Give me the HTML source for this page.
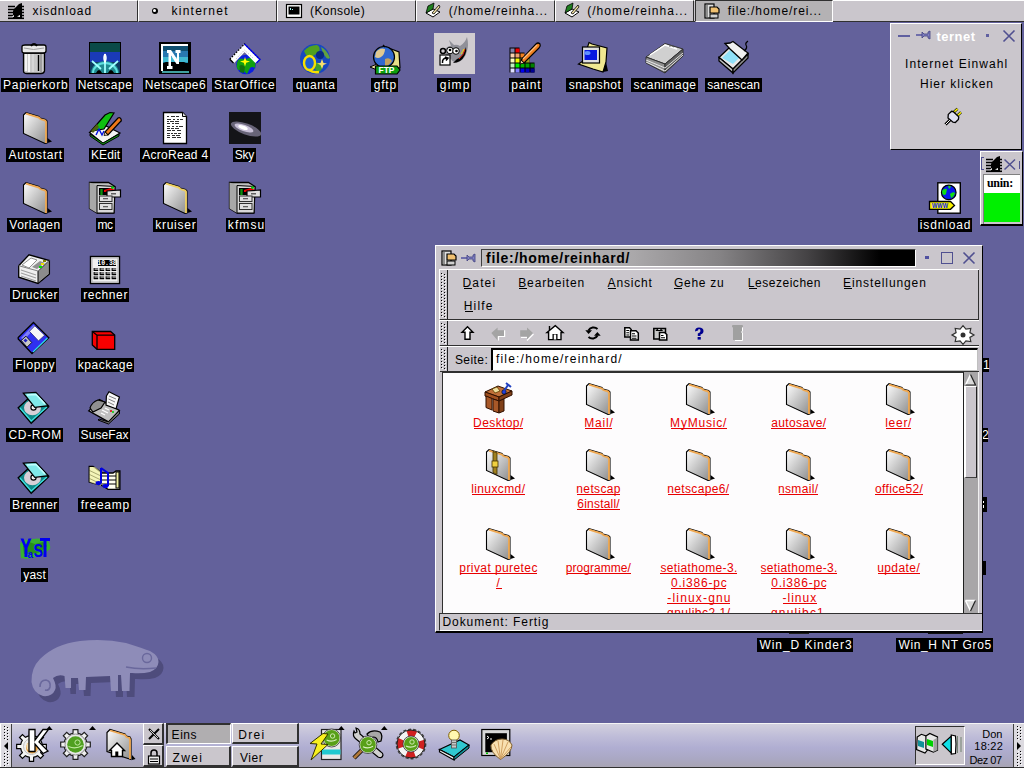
<!DOCTYPE html><html><head><meta charset="utf-8"><style>
*{box-sizing:border-box}
body{margin:0;width:1024px;height:768px;position:relative;overflow:hidden;background:#63619b;font-family:"Liberation Sans",sans-serif;font-size:12px;color:#000}
.a{position:absolute}
.lbl{position:absolute;background:#000;color:#fff;font-size:12px;line-height:14px;height:14px;padding:0 2px;letter-spacing:0.4px;white-space:nowrap}
.tab{position:absolute;top:0;height:22px;background:#cac6cc;border-top:1px solid #fff;border-left:1px solid #fff;border-right:1px solid #303030;border-bottom:1px solid #303030;font-size:12px;letter-spacing:0.6px;white-space:nowrap}
.tab span{position:absolute;top:3px;line-height:14px}
svg{position:absolute;overflow:visible}
.t{position:absolute;white-space:nowrap;line-height:14px}
.dots{position:absolute;background-image:radial-gradient(circle,#505050 0.9px,transparent 1.1px);background-size:4px 4px}
</style></head><body><svg width="0" height="0" style="position:absolute"><defs>
<linearGradient id="gfold" x1="0" y1="0" x2="1" y2="1"><stop offset="0" stop-color="#ffffff"/><stop offset="1" stop-color="#8c8c8c"/></linearGradient>
<linearGradient id="gmetal" x1="0" y1="0" x2="1" y2="0"><stop offset="0" stop-color="#f0f0f0"/><stop offset=".5" stop-color="#b0b0b0"/><stop offset="1" stop-color="#707070"/></linearGradient>
<radialGradient id="gglobe" cx=".35" cy=".35" r=".7"><stop offset="0" stop-color="#8ec8ff"/><stop offset=".6" stop-color="#2a5cc0"/><stop offset="1" stop-color="#0a2060"/></radialGradient>
<linearGradient id="gtitle" x1="0" y1="0" x2="1" y2="0"><stop offset="0" stop-color="#c4c2c4"/><stop offset=".45" stop-color="#8a888a"/><stop offset=".8" stop-color="#202020"/><stop offset="1" stop-color="#000"/></linearGradient>
<radialGradient id="gsuse" cx=".4" cy=".4" r=".7"><stop offset="0" stop-color="#8cc860"/><stop offset="1" stop-color="#2e7a10"/></radialGradient>
<linearGradient id="gteal" x1="0" y1="0" x2="1" y2="1"><stop offset="0" stop-color="#a0f0f0"/><stop offset="1" stop-color="#108080"/></linearGradient>
</defs></svg><svg style="left:0;top:620px" width="200" height="100" viewBox="0 620 200 100">
<path fill="#4e4c7c" transform="translate(5,6)" d="M53 678 Q57 686 55 690 Q52 697 43 696 Q33 693 31.5 682 Q31 668 40 659 Q55 644 80 641 Q104 638 126 643 Q142 648 150 651 Q159 656 158.5 662 Q158 669 150 672 Q142 674 132 673 L130 673 L129.5 691 L122 691 L121 675 L118 675 L118 691 L111 691 L110 676 L86 677 L85.5 690 L79 690 L78 678 L71 678 L71 688 L65.5 688 L64.5 676 Q58 674 53 678 Z"/>
<path fill="#8e8cb8" d="M53 678 Q57 686 55 690 Q52 697 43 696 Q33 693 31.5 682 Q31 668 40 659 Q55 644 80 641 Q104 638 126 643 Q142 648 150 651 Q159 656 158.5 662 Q158 669 150 672 Q142 674 132 673 L130 673 L129.5 691 L122 691 L121 675 L118 675 L118 691 L111 691 L110 676 L86 677 L85.5 690 L79 690 L78 678 L71 678 L71 688 L65.5 688 L64.5 676 Q58 674 53 678 Z"/>
<path d="M40 687 Q40 680 46 680 Q51 681 50 687 Q49 691 45 690" stroke="#6a689c" stroke-width="1.6" fill="none"/>
<circle cx="147" cy="658" r="4.5" fill="none" stroke="#6a689c" stroke-width="1.4"/>
<path d="M126 667 Q140 670 156 668" stroke="#6a689c" stroke-width="1.4" fill="none"/>
</svg><svg style="left:19px;top:42px" width="32" height="32" viewBox="0 0 32 32"><path d="M4.5 11 L25.5 11 L25.5 29 Q25 31.5 22 31.5 L8 31.5 Q4.5 31.5 4.5 29 Z" fill="#c8c8c8" stroke="#000" stroke-width="1.3"/>
<path d="M7 12 L7 29 M10 12 L10 30" stroke="#fff" stroke-width="1.6"/>
<path d="M14 12 L14 30" stroke="#e0e0e0" stroke-width="1.2"/>
<path d="M19.5 13 L19.5 29" stroke="#000" stroke-width="1.4"/><path d="M22 12 L22 30" stroke="#909090" stroke-width="1.5"/>
<path d="M3 4.5 Q3 3 6 3 L25 3 Q27 3 27 5 L27 9 Q27 11 24 11 L6 11 Q3 11 3 9 Z" fill="#e8e8e8" stroke="#000" stroke-width="1.3"/>
<path d="M5 6 Q14 9 25 6" stroke="#a0a0a0" stroke-width="1" fill="none"/>
<path d="M12 4 Q15 0 18 4" stroke="#000" stroke-width="1.8" fill="#606060"/>
</svg><div class="a" style="left:1.0px;top:78px;width:68.0px;height:14px;background:#000"></div><div class="t" style="left:1.0px;top:78px;width:68.7px;text-align:center;color:#fff;letter-spacing:0.722px;text-indent:0.722px">Papierkorb</div><svg style="left:89px;top:42px" width="32" height="32" viewBox="0 0 32 32"><rect x="0.5" y="0.5" width="31" height="31" fill="#0e3a60" stroke="#000" stroke-width="1"/>
<rect x="1" y="1" width="30" height="9" fill="#0a4a48"/>
<rect x="1" y="10" width="30" height="10" fill="#1a3ab8"/>
<path d="M2 31 A14 12 0 0 1 30 31 Z" fill="#208a90"/>
<path d="M4 31 A12 10 0 0 1 28 31" fill="none" stroke="#60e0e0" stroke-width="2"/>
<path d="M16 12 L16 31 M3 19 L12 27 M29 19 L20 27" stroke="#a0ffff" stroke-width="1.8"/>
<path d="M16 12 Q14 16 16 20 Q18 16 16 12" stroke="#fff" stroke-width="1.5" fill="none"/>
<path d="M7 31 Q10 25 13 31 Z M19 31 Q22 25 25 31 Z" fill="#000"/>
</svg><div class="a" style="left:76.0px;top:78px;width:57.0px;height:14px;background:#000"></div><div class="t" style="left:76.0px;top:78px;width:57.5px;text-align:center;color:#fff;letter-spacing:0.500px;text-indent:0.500px">Netscape</div><svg style="left:159px;top:42px" width="32" height="32" viewBox="0 0 32 32"><rect x="0" y="0" width="32" height="32" fill="#000"/><rect x="2" y="2" width="27" height="27" fill="#fff"/><rect x="4" y="4" width="25" height="25" fill="#2090b0"/><rect x="4" y="4" width="25" height="5" fill="#105070"/><rect x="4" y="9" width="25" height="6" fill="#2878b0"/><rect x="4" y="15" width="25" height="5" fill="#40b8d0"/><path d="M4 29 L4 21 L7 20 L25 20 L27 21 L29 21 L29 29 Z" fill="#000"/><rect x="3" y="29" width="27" height="2" fill="#40a0a0"/><path d="M8 8 L12 8 L18 17 L18 11 L16.5 11 L16.5 8 L21.5 8 L21.5 11 L20 11 L20 22 L17.5 22 L12 13.5 L12 24 L13.5 24 L13.5 27 L8 27 L8 24 L9.5 24 L9.5 11 L8 11 Z" fill="#fff"/></svg><div class="a" style="left:143.0px;top:78px;width:64.0px;height:14px;background:#000"></div><div class="t" style="left:143.0px;top:78px;width:64.4px;text-align:center;color:#fff;letter-spacing:0.438px;text-indent:0.438px">Netscape6</div><svg style="left:229px;top:42px" width="32" height="32" viewBox="0 0 32 32"><circle cx="17" cy="22.5" r="9.8" fill="#0c20e0"/><path d="M9 18 Q13 15 16 18 Q20 15 24 16 L26.5 21 L26 26 Q23 24 21 26 L18 32 L15 29 Q12 27 9 28 Q7 25 8 21 Z" fill="#10a010"/><path d="M10.5 24 Q13 21.5 16 25 L15 31 L11 30 Z" fill="#107010"/><path d="M3 19 L15.5 6 L28.5 19" stroke="#fff" stroke-width="6" fill="none" stroke-linejoin="miter"/><path d="M0.8 17.3 L15.5 2 L31 17.5" stroke="#000" stroke-width="1.3" stroke-dasharray="1.6 1.4" fill="none"/><path d="M15.5 2 L31 17.5 L27.5 21" stroke="#0000f0" stroke-width="1.3" fill="none"/><path d="M0.8 17.3 L4.5 21" stroke="#000" stroke-width="1.3"/><path d="M7 17 L15.5 8 L24 16" stroke="#b0b0c0" stroke-width="1" stroke-dasharray="1 1.5" fill="none"/><path d="M16 15 L17.2 18.5 L21 19.5 L17.2 20.8 L16 24.5 L14.8 20.8 L11 19.5 L14.8 18.5 Z" fill="#ffff00"/></svg><div class="a" style="left:212.0px;top:78px;width:64.0px;height:14px;background:#000"></div><div class="t" style="left:212.0px;top:78px;width:64.8px;text-align:center;color:#fff;letter-spacing:0.833px;text-indent:0.833px">StarOffice</div><svg style="left:299px;top:42px" width="32" height="32" viewBox="0 0 32 32"><circle cx="16" cy="17" r="15" fill="#1848c0"/>
<path d="M5 9 Q10 3 18 3 Q22 5 20 10 Q17 12 14 14 Q9 15 7 13 Z" fill="#50a020"/>
<path d="M22 5 Q28 8 31 16 Q28 18 26 14 Q23 10 22 5 Z" fill="#60a040"/>
<path d="M17 21 Q22 20 24 24 Q22 30 18 31 Q15 27 17 21 Z" fill="#40a030"/>
<circle cx="21" cy="13" r="4" fill="#0a2a80"/>
<ellipse cx="10.5" cy="21" rx="5.5" ry="7" fill="#2060d0" stroke="#f8e000" stroke-width="2.4"/>
<path d="M10 28 Q14 31 20 30" stroke="#f8e000" stroke-width="2.4" fill="none"/>
<path d="M23 17 L24.5 21 L28 21.5 L24.5 23 L23 27 L21.5 23 L18 21.5 L21.5 21 Z" fill="#f8e070"/>
</svg><div class="a" style="left:293.0px;top:78px;width:44.0px;height:14px;background:#000"></div><div class="t" style="left:293.0px;top:78px;width:44.5px;text-align:center;color:#fff;letter-spacing:0.500px;text-indent:0.500px">quanta</div><svg style="left:369px;top:42px" width="32" height="32" viewBox="0 0 32 32"><path d="M17 5 L30 10 L31 26 L16 26 Z" fill="#e8e088" stroke="#000" stroke-width="1.2"/>
<circle cx="15" cy="15" r="10.5" fill="#3068d0" stroke="#000" stroke-width="1.2"/>
<path d="M7 10 Q11 5 16 7 Q16 12 12 15 Q9 17 6 15 Z" fill="#e0c890"/>
<path d="M16 17 Q21 15 23 19 Q20 24 16 24 Z" fill="#c0a060"/>
<path d="M14 3 L16 5" stroke="#000" stroke-width="1.5"/>
<path d="M1 25 L8 22 L8 28 Z" fill="#f0e0a0" stroke="#000" stroke-width="1"/>
<path d="M6.5 24 L28 24 L31 28 L28 32 L6.5 32 Z" fill="#10a010" stroke="#000" stroke-width="1.2"/>
<text x="17.5" y="31" font-family="Liberation Sans" font-weight="bold" font-size="8.5" text-anchor="middle" fill="#fff">FTP</text>
</svg><div class="a" style="left:371.0px;top:78px;width:27.0px;height:14px;background:#000"></div><div class="t" style="left:371.0px;top:78px;width:27.8px;text-align:center;color:#fff;letter-spacing:0.833px;text-indent:0.833px">gftp</div><div class="a" style="left:434px;top:33px;width:41px;height:41px;background:#d0ccd0"></div><svg style="left:439px;top:37px" width="32" height="32" viewBox="0 0 32 32"><path d="M6 14 Q7 9 12 9 L10 3 L15 8 Q18 7 21 9 Q26 6 28 0 Q30 8 28 14 Q26 22 20 25 Q14 26 12 22 Q7 20 6 14 Z" fill="#909098"/>
<circle cx="11" cy="13.5" r="3.3" fill="#fff" stroke="#000" stroke-width="1"/><circle cx="17" cy="14" r="3.3" fill="#fff" stroke="#000" stroke-width="1"/>
<circle cx="11" cy="13" r="1.3" fill="#000"/><circle cx="17.5" cy="14" r="1.3" fill="#000"/>
<path d="M14 26 Q22 26 26 18 Q28 14 27 10 Q24 20 18 22 Z" fill="#000"/>
<path d="M20 22 Q25 18 26 12" stroke="#e02000" stroke-width="1" fill="none"/><path d="M22 17 Q24 14 25 12" stroke="#f0e000" stroke-width="1" fill="none"/>
<circle cx="4" cy="14" r="2.5" fill="none" stroke="#000" stroke-width="1.5"/>
<rect x="1" y="18" width="10" height="10" fill="#fff" stroke="#000" stroke-width="1.2"/>
<path d="M3.5 26 Q3 21 8 21 M6 20 L9 21 L7 23.5" stroke="#000" stroke-width="1.5" fill="none"/>
</svg><div class="a" style="left:437.0px;top:78px;width:34.0px;height:14px;background:#000"></div><div class="t" style="left:437.0px;top:78px;width:35.2px;text-align:center;color:#fff;letter-spacing:1.167px;text-indent:1.167px">gimp</div><svg style="left:509px;top:42px" width="32" height="32" viewBox="0 0 32 32"><path d="M0.5 5.5 H10.5 V10.5 H15.5 V15.5 H20.5 V20.5 H25.5 V30.5 H0.5 Z" fill="#000"/><rect x="1.5" y="6.5" width="4" height="4" fill="#8080a8"/><rect x="6.5" y="6.5" width="4" height="4" fill="#f00000"/><rect x="1.5" y="11.5" width="4" height="4" fill="#f8d0b0"/><rect x="6.5" y="11.5" width="4" height="4" fill="#f0a070"/><rect x="11.5" y="11.5" width="4" height="4" fill="#f08020"/><rect x="1.5" y="16.5" width="4" height="4" fill="#f8f8c0"/><rect x="6.5" y="16.5" width="4" height="4" fill="#f8f800"/><rect x="11.5" y="16.5" width="4" height="4" fill="#c8c840"/><rect x="16.5" y="16.5" width="4" height="4" fill="#a0a020"/><rect x="1.5" y="21.5" width="4" height="4" fill="#c0f0c0"/><rect x="6.5" y="21.5" width="4" height="4" fill="#00f000"/><rect x="11.5" y="21.5" width="4" height="4" fill="#00b000"/><rect x="16.5" y="21.5" width="4" height="4" fill="#00a000"/><rect x="21.5" y="21.5" width="4" height="4" fill="#008000"/><rect x="1.5" y="26.5" width="4" height="4" fill="#e0e0ff"/><rect x="6.5" y="26.5" width="4" height="4" fill="#8080ff"/><rect x="11.5" y="26.5" width="4" height="4" fill="#0000f0"/><rect x="16.5" y="26.5" width="4" height="4" fill="#0000c0"/><rect x="21.5" y="26.5" width="4" height="4" fill="#000090"/><path d="M12 18 L27 2 Q29 0 31 2 Q32 4 30 6 L15 21 Z" fill="#f08020" stroke="#000" stroke-width="1.2"/><path d="M14 17 L28 3" stroke="#ffc080" stroke-width="1.2"/><path d="M12 18 L15 21 L11 22 Z" fill="#f0d0a0" stroke="#000" stroke-width=".8"/></svg><div class="a" style="left:509.0px;top:78px;width:33.0px;height:14px;background:#000"></div><div class="t" style="left:509.0px;top:78px;width:33.9px;text-align:center;color:#fff;letter-spacing:0.875px;text-indent:0.875px">paint</div><svg style="left:579px;top:42px" width="32" height="32" viewBox="0 0 32 32"><path d="M10 0.5 L13 2 L28 6 L27 20 L24 30 L14 27 L-0.5 22 L4 19 Z" fill="#f0e890" stroke="#000" stroke-width="1.2"/>
<path d="M27 20 L24 30 L29 29 Z" fill="#000"/>
<rect x="3.5" y="5" width="17" height="16" fill="#e0e0e0" stroke="#000" stroke-width="1.2"/>
<rect x="5.5" y="8" width="12.5" height="10" fill="#0818e0"/>
<ellipse cx="8.5" cy="11" rx="3" ry="2" fill="#6090ff"/>
</svg><div class="a" style="left:566.0px;top:78px;width:57.0px;height:14px;background:#000"></div><div class="t" style="left:566.0px;top:78px;width:57.5px;text-align:center;color:#fff;letter-spacing:0.500px;text-indent:0.500px">snapshot</div><svg style="left:649px;top:42px" width="32" height="32" viewBox="0 0 32 32"><path d="M-3 15 L16 1.5 L34 7 L16 22 Z" fill="#d0d0d0" stroke="#303030" stroke-width="1"/>
<path d="M-3 15 L16 22 L16 31 L-3 21 Z" fill="#909090" stroke="#303030" stroke-width="1"/>
<path d="M16 22 L34 7 L34 14 L16 31 Z" fill="#606060" stroke="#303030" stroke-width="1"/>
<path d="M-3 18 L16 26 L34 11 M-3 20 L16 29 L34 13" stroke="#f0f0f0" stroke-width=".9" fill="none"/>
<path d="M1 13 L16 3 L28 7" stroke="#ffffff" stroke-width="1.5" fill="none"/>
<path d="M20 4 Q23 3 25 5" stroke="#505050" stroke-width="1" fill="none"/>
</svg><div class="a" style="left:631.0px;top:78px;width:67.0px;height:14px;background:#000"></div><div class="t" style="left:631.0px;top:78px;width:67.6px;text-align:center;color:#fff;letter-spacing:0.562px;text-indent:0.562px">scanimage</div><svg style="left:719px;top:42px" width="32" height="32" viewBox="0 0 32 32"><path d="M0 15.5 L11 5 L29 12 L14 27 Z" fill="#e8e8e8" stroke="#000" stroke-width="1.3"/>
<path d="M3 16 L11 8 L23 13 L14 22 Z" fill="#90e0f8"/>
<path d="M0 15.5 L14 27 L14 31 L0 19 Z" fill="#c0c0c0" stroke="#000" stroke-width="1.3"/>
<path d="M14 27 L29 12 L29 16 L14 31 Z" fill="#909090" stroke="#000" stroke-width="1.3"/>
<path d="M6 1.5 L11 1 L14 -0.5 L29 11 L23 18 L11 7 Z" fill="#f0f0f0" stroke="#000" stroke-width="1.3"/>
<path d="M25 9 Q29 6 27 3 Q26 1 29 -1" stroke="#000" stroke-width="1.2" fill="none"/>
</svg><div class="a" style="left:705.0px;top:78px;width:57.0px;height:14px;background:#000"></div><div class="t" style="left:705.0px;top:78px;width:57.2px;text-align:center;color:#fff;letter-spacing:0.214px;text-indent:0.214px">sanescan</div><svg style="left:20.5px;top:112px" width="32" height="32" viewBox="0 0 32 32"><path d="M2.5 3 L5 0.5 L18 4.5 L19 6 L24.5 7.5 L26 9 L26 31 L24 31.5 L2.5 21.5 Z" fill="url(#gfold)" stroke="#000" stroke-width="1.1"/>
<path d="M5 1.6 L18 5.6 L19.3 7 L24.3 8.6 L25 10 L25 31" stroke="#f0a850" stroke-width="1.8" fill="none"/>
<path d="M26.5 26 L31 29.5 L26.5 31 Z" fill="#000"/></svg><div class="a" style="left:6.0px;top:148px;width:58.0px;height:14px;background:#000"></div><div class="t" style="left:6.0px;top:148px;width:58.7px;text-align:center;color:#fff;letter-spacing:0.688px;text-indent:0.688px">Autostart</div><svg style="left:89px;top:112px" width="32" height="32" viewBox="0 0 32 32"><path d="M0.5 20.5 L6 17 L17 14 L31 21 L14 31.5 Z" fill="#f4f4f4" stroke="#000" stroke-width="1.2"/>
<path d="M1 22 L14 31 L30 22 L30 24 L14 33 L1 24 Z" fill="#10a010" stroke="#000" stroke-width="1"/>
<path d="M2 19 L16 3 L21 0.5 L25 1 L15 17 Z" fill="#10c010" stroke="#000" stroke-width="1.2"/>
<path d="M2 19 L8 12 L10 15 L4 21 Z" fill="#506010"/>
<path d="M7 23 L10 17 L13 23 L15 19" stroke="#0010e0" stroke-width="1.4" fill="none"/>
<path d="M16 20 L29 6 Q31 5 32 7 Q33 9 31 10 L19 23 Z" fill="#f07818" stroke="#000" stroke-width="1.2"/>
<path d="M16 20 L19 23 L15 23.5 Z" fill="#f0d0b0" stroke="#000" stroke-width=".8"/>
</svg><div class="a" style="left:89.0px;top:148px;width:33.0px;height:14px;background:#000"></div><div class="t" style="left:89.0px;top:148px;width:33.1px;text-align:center;color:#fff;letter-spacing:0.125px;text-indent:0.125px">KEdit</div><svg style="left:159px;top:112px" width="32" height="32" viewBox="0 0 32 32"><path d="M4.5 0.5 L23.5 0.5 L27.5 4.5 L27.5 31.5 L4.5 31.5 Z" fill="#fff" stroke="#000" stroke-width="1.3"/><path d="M23.5 0.5 L23.5 4.5 L27.5 4.5" fill="#e0e0e0" stroke="#000" stroke-width="1"/><rect x="8" y="4" width="2" height="1" fill="#303030"/><rect x="12" y="4" width="4" height="1" fill="#303030"/><rect x="17" y="4" width="3" height="1" fill="#303030"/><rect x="8" y="7" width="4" height="1" fill="#303030"/><rect x="14" y="7" width="2" height="1" fill="#303030"/><rect x="18" y="7" width="2" height="1" fill="#303030"/><rect x="21" y="7" width="3" height="1" fill="#303030"/><rect x="8" y="9" width="2" height="1" fill="#303030"/><rect x="11" y="9" width="4" height="1" fill="#303030"/><rect x="16" y="9" width="4" height="1" fill="#303030"/><rect x="8" y="11" width="3" height="1" fill="#303030"/><rect x="13" y="11" width="2" height="1" fill="#303030"/><rect x="16" y="11" width="4" height="1" fill="#303030"/><rect x="8" y="14" width="3" height="1" fill="#303030"/><rect x="13" y="14" width="2" height="1" fill="#303030"/><rect x="17" y="14" width="2" height="1" fill="#303030"/><rect x="20" y="14" width="4" height="1" fill="#303030"/><rect x="8" y="16" width="3" height="1" fill="#303030"/><rect x="12" y="16" width="3" height="1" fill="#303030"/><rect x="16" y="16" width="4" height="1" fill="#303030"/><rect x="8" y="18" width="4" height="1" fill="#303030"/><rect x="13" y="18" width="3" height="1" fill="#303030"/><rect x="18" y="18" width="4" height="1" fill="#303030"/><rect x="8" y="21" width="3" height="1" fill="#303030"/><rect x="12" y="21" width="2" height="1" fill="#303030"/><rect x="15" y="21" width="3" height="1" fill="#303030"/><rect x="19" y="21" width="3" height="1" fill="#303030"/><rect x="8" y="23" width="3" height="1" fill="#303030"/><rect x="13" y="23" width="3" height="1" fill="#303030"/><rect x="17" y="23" width="4" height="1" fill="#303030"/><rect x="8" y="25" width="3" height="1" fill="#303030"/><rect x="13" y="25" width="4" height="1" fill="#303030"/><rect x="18" y="25" width="4" height="1" fill="#303030"/></svg><div class="a" style="left:140.0px;top:148px;width:70.0px;height:14px;background:#000"></div><div class="t" style="left:140.0px;top:148px;width:70.3px;text-align:center;color:#fff;letter-spacing:0.278px;text-indent:0.278px">AcroRead 4</div><svg style="left:229px;top:112px" width="32" height="32" viewBox="0 0 32 32"><rect x="0" y="0" width="32" height="32" fill="#141418"/><ellipse cx="17" cy="17" rx="16" ry="5.5" transform="rotate(20 17 17)" fill="#686478"/><ellipse cx="15" cy="16" rx="10" ry="3.2" transform="rotate(20 15 16)" fill="#c8c0d8"/><ellipse cx="14" cy="15.5" rx="5" ry="1.8" transform="rotate(20 14 15.5)" fill="#fff"/></svg><div class="a" style="left:233.0px;top:148px;width:23.0px;height:14px;background:#000"></div><div class="t" style="left:233.0px;top:148px;width:22.8px;text-align:center;color:#fff;letter-spacing:-0.250px;text-indent:-0.250px">Sky</div><svg style="left:20.5px;top:182px" width="32" height="32" viewBox="0 0 32 32"><path d="M2.5 3 L5 0.5 L18 4.5 L19 6 L24.5 7.5 L26 9 L26 31 L24 31.5 L2.5 21.5 Z" fill="url(#gfold)" stroke="#000" stroke-width="1.1"/>
<path d="M5 1.6 L18 5.6 L19.3 7 L24.3 8.6 L25 10 L25 31" stroke="#f0a850" stroke-width="1.8" fill="none"/>
<path d="M26.5 26 L31 29.5 L26.5 31 Z" fill="#000"/></svg><div class="a" style="left:7.0px;top:218px;width:55.0px;height:14px;background:#000"></div><div class="t" style="left:7.0px;top:218px;width:55.5px;text-align:center;color:#fff;letter-spacing:0.500px;text-indent:0.500px">Vorlagen</div><svg style="left:89px;top:182px" width="32" height="32" viewBox="0 0 32 32"><path d="M0.5 0.5 L19.5 0.5 L26 4.5 L25 31 L8 31 L0.5 26.5 Z" fill="#c0c0c0" stroke="#000" stroke-width="1.3"/>
<path d="M0.5 0.5 L8 3.5 L8 31 L0.5 26.5 Z" fill="#a8a8a8"/>
<path d="M8 3.5 L26 4.5 L25 31 L8 31 Z" fill="#d8d8d8" stroke="#000" stroke-width="1"/>
<rect x="10" y="6" width="13" height="7" fill="#000"/>
<path d="M12 7 L12 13 M13 7 L13 13" stroke="#10c010" stroke-width="1"/>
<path d="M15 8 L22 6 L26 8 L26 9 L15 10 Z" fill="#f00000"/>
<circle cx="23.5" cy="5.5" r="1.5" fill="#10c010"/>
<path d="M18 9 L31.5 8 L31.5 15 L18 15 Z" fill="#e0e0e0" stroke="#000" stroke-width="1.2"/>
<rect x="22" y="11" width="5" height="1.5" fill="#606060"/>
<rect x="10.5" y="14" width="12.5" height="5.5" fill="#e0e0e0" stroke="#303030" stroke-width="1"/>
<rect x="10.5" y="21.5" width="12.5" height="6" fill="#e0e0e0" stroke="#303030" stroke-width="1"/>
<rect x="14" y="16" width="5" height="1.3" fill="#606060"/><rect x="14" y="24" width="5" height="1.3" fill="#606060"/>
</svg><div class="a" style="left:96.0px;top:218px;width:19.0px;height:14px;background:#000"></div><div class="t" style="left:96.0px;top:218px;width:18.5px;text-align:center;color:#fff;letter-spacing:-0.500px;text-indent:-0.500px">mc</div><svg style="left:160.5px;top:182px" width="32" height="32" viewBox="0 0 32 32"><path d="M2.5 3 L5 0.5 L18 4.5 L19 6 L24.5 7.5 L26 9 L26 31 L24 31.5 L2.5 21.5 Z" fill="url(#gfold)" stroke="#000" stroke-width="1.1"/>
<path d="M5 1.6 L18 5.6 L19.3 7 L24.3 8.6 L25 10 L25 31" stroke="#f0d060" stroke-width="1.8" fill="none"/>
<path d="M26.5 26 L31 29.5 L26.5 31 Z" fill="#000"/></svg><div class="a" style="left:153.0px;top:218px;width:44.0px;height:14px;background:#000"></div><div class="t" style="left:153.0px;top:218px;width:44.8px;text-align:center;color:#fff;letter-spacing:0.750px;text-indent:0.750px">kruiser</div><svg style="left:229px;top:182px" width="32" height="32" viewBox="0 0 32 32"><path d="M0.5 0.5 L19.5 0.5 L26 4.5 L25 31 L8 31 L0.5 26.5 Z" fill="#c0c0c0" stroke="#000" stroke-width="1.3"/>
<path d="M0.5 0.5 L8 3.5 L8 31 L0.5 26.5 Z" fill="#a8a8a8"/>
<path d="M8 3.5 L26 4.5 L25 31 L8 31 Z" fill="#d8d8d8" stroke="#000" stroke-width="1"/>
<rect x="10" y="6" width="13" height="7" fill="#000"/>
<path d="M12 7 L12 13 M13 7 L13 13" stroke="#10c010" stroke-width="1"/>
<path d="M15 8 L22 6 L26 8 L26 9 L15 10 Z" fill="#f00000"/>
<circle cx="23.5" cy="5.5" r="1.5" fill="#10c010"/>
<path d="M18 9 L31.5 8 L31.5 15 L18 15 Z" fill="#e0e0e0" stroke="#000" stroke-width="1.2"/>
<rect x="22" y="11" width="5" height="1.5" fill="#606060"/>
<rect x="10.5" y="14" width="12.5" height="5.5" fill="#e0e0e0" stroke="#303030" stroke-width="1"/>
<rect x="10.5" y="21.5" width="12.5" height="6" fill="#e0e0e0" stroke="#303030" stroke-width="1"/>
<rect x="14" y="16" width="5" height="1.3" fill="#606060"/><rect x="14" y="24" width="5" height="1.3" fill="#606060"/>
</svg><div class="a" style="left:226.0px;top:218px;width:39.0px;height:14px;background:#000"></div><div class="t" style="left:226.0px;top:218px;width:40.1px;text-align:center;color:#fff;letter-spacing:1.125px;text-indent:1.125px">kfmsu</div><svg style="left:19px;top:252px" width="32" height="32" viewBox="0 0 32 32"><path d="M-0.3 13.7 L10 2.8 L30.4 8.5 L30.4 22 L19 31.4 L-0.3 25.2 Z" fill="#f0f0f0" stroke="#000" stroke-width="1.3"/>
<path d="M19 19 L30.4 8.5 L30.4 22 L19 31.4 Z" fill="#8c8c8c" stroke="#000" stroke-width="1"/>
<path d="M-0.3 13.7 L19 19 L30.4 8.5" fill="none" stroke="#808080" stroke-width="1"/>
<path d="M3 13 L12 6 L18 8 L10 16 Z" fill="#fff" stroke="#909090" stroke-width="1"/>
<path d="M13 15 L21 9 L26 11 L18 17 Z" fill="#909090"/>
<path d="M2 18 L17 23 M2 21 L17 26 M2 24 L17 29" stroke="#a0a0a0" stroke-width="1.2"/>
<rect x="22" y="11" width="3" height="2" fill="#f0e000"/><rect x="20" y="14" width="3" height="2" fill="#00e000"/><rect x="24" y="8" width="3" height="2" fill="#808000"/>
</svg><div class="a" style="left:10.0px;top:288px;width:49.0px;height:14px;background:#000"></div><div class="t" style="left:10.0px;top:288px;width:49.6px;text-align:center;color:#fff;letter-spacing:0.583px;text-indent:0.583px">Drucker</div><svg style="left:89px;top:252px" width="32" height="32" viewBox="0 0 32 32"><rect x="1.5" y="4.5" width="29" height="27" fill="#f0f0f0" stroke="#000" stroke-width="1.4"/>
<rect x="3" y="6" width="26" height="24" fill="none" stroke="#b0b0b0" stroke-width="1"/>
<rect x="9" y="8" width="18" height="6" fill="#000"/>
<text x="18" y="13.3" font-family="Liberation Mono" font-size="6.5" text-anchor="middle" fill="#fff" font-weight="bold">10.38</text><path d="M5.2 16.0 L5.2 18.5 L9.2 18.5" stroke="#000" stroke-width="1.2" fill="none"/><rect x="5.9" y="16.0" width="3.3" height="1.8" fill="#707070"/><path d="M11.2 16.0 L11.2 18.5 L15.2 18.5" stroke="#000" stroke-width="1.2" fill="none"/><rect x="11.899999999999999" y="16.0" width="3.3" height="1.8" fill="#707070"/><path d="M17.2 16.0 L17.2 18.5 L21.2 18.5" stroke="#000" stroke-width="1.2" fill="none"/><rect x="17.9" y="16.0" width="3.3" height="1.8" fill="#707070"/><path d="M23.2 16.0 L23.2 18.5 L27.2 18.5" stroke="#000" stroke-width="1.2" fill="none"/><rect x="23.9" y="16.0" width="3.3" height="1.8" fill="#707070"/><path d="M5.2 20.1 L5.2 22.6 L9.2 22.6" stroke="#000" stroke-width="1.2" fill="none"/><rect x="5.9" y="20.1" width="3.3" height="1.8" fill="#707070"/><path d="M11.2 20.1 L11.2 22.6 L15.2 22.6" stroke="#000" stroke-width="1.2" fill="none"/><rect x="11.899999999999999" y="20.1" width="3.3" height="1.8" fill="#707070"/><path d="M17.2 20.1 L17.2 22.6 L21.2 22.6" stroke="#000" stroke-width="1.2" fill="none"/><rect x="17.9" y="20.1" width="3.3" height="1.8" fill="#707070"/><path d="M23.2 20.1 L23.2 22.6 L27.2 22.6" stroke="#000" stroke-width="1.2" fill="none"/><rect x="23.9" y="20.1" width="3.3" height="1.8" fill="#707070"/><path d="M5.2 24.2 L5.2 26.7 L9.2 26.7" stroke="#000" stroke-width="1.2" fill="none"/><rect x="5.9" y="24.2" width="3.3" height="1.8" fill="#707070"/><path d="M11.2 24.2 L11.2 26.7 L15.2 26.7" stroke="#000" stroke-width="1.2" fill="none"/><rect x="11.899999999999999" y="24.2" width="3.3" height="1.8" fill="#707070"/><path d="M17.2 24.2 L17.2 26.7 L21.2 26.7" stroke="#000" stroke-width="1.2" fill="none"/><rect x="17.9" y="24.2" width="3.3" height="1.8" fill="#707070"/><path d="M23.2 24.2 L23.2 26.7 L27.2 26.7" stroke="#000" stroke-width="1.2" fill="none"/><rect x="23.9" y="24.2" width="3.3" height="1.8" fill="#707070"/></svg><div class="a" style="left:81.0px;top:288px;width:48.0px;height:14px;background:#000"></div><div class="t" style="left:81.0px;top:288px;width:48.6px;text-align:center;color:#fff;letter-spacing:0.583px;text-indent:0.583px">rechner</div><svg style="left:19px;top:322px" width="32" height="32" viewBox="0 0 32 32"><path d="M14.5 0.5 L29.8 15.8 L13 31.5 L-0.8 17 L-0.8 15.5 Z" fill="#3030f0" stroke="#000" stroke-width="1.3"/>
<path d="M2 16 L14.5 3 L17 5 L5 18 Z" fill="#8080f8"/>
<path d="M10.4 9.3 L15.8 3.8 L25.7 13.2 L19.5 18.9 Z" fill="#f8f8f8" stroke="#202080" stroke-width=".8"/>
<path d="M2.3 18.4 L7 14.2 L12.7 20.5 L8 25.2 Z" fill="#c8c8c8" stroke="#000" stroke-width=".8"/>
<rect x="5" y="17" width="3" height="3" transform="rotate(45 6.5 18.5)" fill="#2020c0"/>
<path d="M14 30 L28.5 16" stroke="#30e0f0" stroke-width="1.2"/>
</svg><div class="a" style="left:13.0px;top:358px;width:43.0px;height:14px;background:#000"></div><div class="t" style="left:13.0px;top:358px;width:43.7px;text-align:center;color:#fff;letter-spacing:0.700px;text-indent:0.700px">Floppy</div><svg style="left:89px;top:322px" width="32" height="32" viewBox="0 0 32 32"><path d="M3.3 9.5 L21.6 9.5 L25.7 13 L25.7 27.3 L8 27.3 L3.3 23 Z" fill="#f80000" stroke="#000" stroke-width="1.3"/>
<path d="M3.3 9.5 L8 13.2 L25.7 13.2 M8 13.2 L8 27.3" stroke="#000" stroke-width="1.3" fill="none"/>
</svg><div class="a" style="left:76.0px;top:358px;width:58.0px;height:14px;background:#000"></div><div class="t" style="left:76.0px;top:358px;width:58.5px;text-align:center;color:#fff;letter-spacing:0.500px;text-indent:0.500px">kpackage</div><svg style="left:19px;top:392px" width="32" height="32" viewBox="0 0 32 32"><path d="M-0.8 15.8 L12 4 L29.6 14.8 L12.2 31.4 Z" fill="#108888" stroke="#000" stroke-width="1.3"/>
<path d="M1 16 L12.2 29 L28 15" stroke="#40e0e0" stroke-width="1.2" fill="none"/>
<ellipse cx="13.5" cy="15.8" rx="8.5" ry="7.5" fill="#d8d0d8"/>
<circle cx="14.5" cy="15.5" r="2.6" fill="#f0f0f0" stroke="#000" stroke-width="1.2"/>
<path d="M4.4 1.2 L16.9 0.4 L29.4 13.7 L15.8 15.3 Z" fill="#80e8e8" stroke="#000" stroke-width="1.3"/>
<path d="M8 3 L17 2.5 L26 12" stroke="#c0ffff" stroke-width="1.5" fill="none"/>
</svg><div class="a" style="left:6.0px;top:428px;width:57.0px;height:14px;background:#000"></div><div class="t" style="left:6.0px;top:428px;width:57.7px;text-align:center;color:#fff;letter-spacing:0.700px;text-indent:0.700px">CD-ROM</div><svg style="left:89px;top:392px" width="32" height="32" viewBox="0 0 32 32"><path d="M-0.3 18.9 L10.6 7.5 L30.4 18.4 L19.5 29.9 Z" fill="#c0c0c0" stroke="#000" stroke-width="1.3"/>
<path d="M10 27 L19.5 29.9 L30.4 18.4 L30.4 22 L19.5 32 L9 28 Z" fill="#707070" stroke="#000" stroke-width="1"/>
<path d="M1 16 Q3 10 9 8 L16 10 L12 16 L4 20 Z" fill="#909090" stroke="#000" stroke-width="1.2"/>
<path d="M17.4 4 L20 -0.3 L30.4 5 L27 16.8 L17 13 Z" fill="#f8f8f8" stroke="#000" stroke-width="1.2"/>
<path d="M20 4 L27 7 M19.5 7 L26 10 M19 10 L25 13" stroke="#808080" stroke-width="1"/>
<path d="M13 18 L17 20 M12 21 L16 23 M16 16 L20 18 M15 19 L19 21" stroke="#fff" stroke-width="1.3"/>
<circle cx="22" cy="19" r="1" fill="#e00000"/><circle cx="24" cy="20" r="1" fill="#00d000"/>
</svg><div class="a" style="left:79.0px;top:428px;width:51.0px;height:14px;background:#000"></div><div class="t" style="left:79.0px;top:428px;width:51.1px;text-align:center;color:#fff;letter-spacing:0.083px;text-indent:0.083px">SuseFax</div><svg style="left:19px;top:462px" width="32" height="32" viewBox="0 0 32 32"><path d="M-0.8 15.8 L12 4 L29.6 14.8 L12.2 31.4 Z" fill="#108888" stroke="#000" stroke-width="1.3"/>
<path d="M1 16 L12.2 29 L28 15" stroke="#40e0e0" stroke-width="1.2" fill="none"/>
<ellipse cx="13.5" cy="15.8" rx="8.5" ry="7.5" fill="#d8d0d8"/>
<circle cx="14.5" cy="15.5" r="2.6" fill="#f0f0f0" stroke="#000" stroke-width="1.2"/>
<path d="M4.4 1.2 L16.9 0.4 L29.4 13.7 L15.8 15.3 Z" fill="#80e8e8" stroke="#000" stroke-width="1.3"/>
<path d="M8 3 L17 2.5 L26 12" stroke="#c0ffff" stroke-width="1.5" fill="none"/>
</svg><div class="a" style="left:10.0px;top:498px;width:49.0px;height:14px;background:#000"></div><div class="t" style="left:10.0px;top:498px;width:49.4px;text-align:center;color:#fff;letter-spacing:0.417px;text-indent:0.417px">Brenner</div><svg style="left:89px;top:462px" width="32" height="32" viewBox="0 0 32 32"><path d="M0.2 4.3 L4 4.3 L13 11 L24 11 L27 9 L30.9 9 L30.9 27.3 L19 27.3 L14 24 L0.2 20 Z" fill="#fffff0" stroke="#000" stroke-width="1.3"/>
<path d="M0.5 8.5 L12 14 L29 14 M0.5 12.5 L12 18 L29 18 M0.5 16.5 L12 22 L29 22" stroke="#000" stroke-width="1" fill="none"/>
<path d="M0.5 5 L6 5 L12 10 L12 24 L0.5 20 Z" fill="#f0f0a0" opacity=".7"/>
<rect x="27" y="10" width="3" height="16" fill="#f0f0a0" stroke="#000" stroke-width="1"/>
<path d="M12 6 L12 21 M12 6 L19 11 L19 24" stroke="#0000e0" stroke-width="2" fill="none"/>
<ellipse cx="9.5" cy="21" rx="3" ry="2" fill="#0000e0"/><ellipse cx="16.5" cy="24" rx="3" ry="2" fill="#0000e0"/>
</svg><div class="a" style="left:78.0px;top:498px;width:53.0px;height:14px;background:#000"></div><div class="t" style="left:78.0px;top:498px;width:53.8px;text-align:center;color:#fff;letter-spacing:0.750px;text-indent:0.750px">freeamp</div><svg style="left:19px;top:532px" width="32" height="32" viewBox="0 0 32 32"><path d="M1 12 Q4 7 10 8 Q18 5 28 8 Q32 12 31 17 Q26 22 20 24 Q10 28 2 26 Z" fill="#30c020" opacity=".85"/>
<path d="M4 14 L10 10 L16 12 L24 10 L28 14 L22 20 L12 22 L5 22 Z" fill="#208010" opacity=".7"/>
<path d="M1.5 6.5 L4.5 6.5 L7 13 L9.5 6.5 L12.5 6.5 L8.5 16 L8.5 25 L5.5 25 L5.5 16 Z" fill="#0000f0"/>
<text x="8.5" y="26" font-family="Liberation Sans" font-weight="bold" font-size="10" fill="#0000f0">a</text>
<text x="14.5" y="25" font-family="Liberation Sans" font-weight="bold" font-size="19" fill="#0000f0" transform="scale(.75 1)" transform-origin="14.5 25">S</text>
<path d="M21 6 L31 6 L31 9 L27.5 9 L27.5 25 L24.5 25 L24.5 9 L21 9 Z" fill="#0000f0"/>
</svg><div class="a" style="left:21.0px;top:568px;width:27.0px;height:14px;background:#000"></div><div class="t" style="left:21.0px;top:568px;width:27.2px;text-align:center;color:#fff;letter-spacing:0.167px;text-indent:0.167px">yast</div><svg style="left:929px;top:182px" width="32" height="32" viewBox="0 0 32 32"><rect x="8.8" y="0.8" width="22.5" height="30.4" fill="#fff" stroke="#000" stroke-width="1.4"/><circle cx="19.75" cy="10.4" r="7.3" fill="#0818f0" stroke="#000" stroke-width="1.2"/><path d="M13 9 Q15 6 18 7 L17 12 Q15 14 13.5 12 Z M19 4 Q21 3 22 5 L20 7 Z M21 12 Q24 9 26 11 Q25 15 22 16 Z" fill="#10e010"/><path d="M0.5 19.5 L21.5 19.5 L25.5 23.4 L21.5 27.3 L0.5 27.3 Z" fill="#f8f000" stroke="#000" stroke-width="1.3"/><text x="3" y="26" font-family="Liberation Sans" font-weight="bold" font-size="7.5" fill="#0818f0" textLength="16" lengthAdjust="spacingAndGlyphs">WWW</text></svg><div class="a" style="left:918.0px;top:218px;width:53.5px;height:14px;background:#000"></div><div class="t" style="left:918.0px;top:218px;width:54.4px;text-align:center;color:#fff;letter-spacing:0.857px;text-indent:0.857px">isdnload</div><div class="a" style="left:981px;top:358px;width:8px;height:14px;background:#000"></div><div class="a" style="left:981px;top:428px;width:7px;height:14px;background:#000"></div><div class="a" style="left:981px;top:497px;width:5.5px;height:15px;background:#000"></div><div class="a" style="left:981px;top:561px;width:4.5px;height:14px;background:#000"></div><div class="t" style="left:983px;top:358px;color:#fff;font-size:12px">1</div><div class="t" style="left:982px;top:428px;color:#fff;font-size:12px">2</div><div class="a" style="left:983px;top:501px;width:1px;height:2px;background:#fff"></div><div class="a" style="left:983px;top:505px;width:1px;height:3px;background:#fff"></div><div class="a" style="left:757.0px;top:638px;width:96.0px;height:14px;background:#000"></div><div class="t" style="left:757.0px;top:638px;width:97.0px;text-align:center;color:#fff;letter-spacing:0.958px;text-indent:0.958px">Win_D Kinder3</div><div class="a" style="left:896.0px;top:638px;width:97.0px;height:14px;background:#000"></div><div class="t" style="left:896.0px;top:638px;width:97.6px;text-align:center;color:#fff;letter-spacing:0.625px;text-indent:0.625px">Win_H NT Gro5</div><div class="a" style="left:0;top:0;width:1024px;height:22px;background:#cac6cc;border-top:1px solid #fff;border-bottom:1px solid #303030"></div><div class="tab" style="left:-1px;width:139px"></div><div class="t" style="left:32.5px;top:4.0px;font-size:12px;font-weight:400;color:#000;letter-spacing:1.000px;">xisdnload</div><div class="tab" style="left:138px;width:139px"></div><div class="t" style="left:171.5px;top:4.0px;font-size:12px;font-weight:400;color:#000;letter-spacing:1.250px;">kinternet</div><div class="tab" style="left:277px;width:139px"></div><div class="t" style="left:310.0px;top:4.0px;font-size:12px;font-weight:400;color:#000;letter-spacing:0.412px;">(Konsole)</div><div class="tab" style="left:416px;width:139px"></div><div class="t" style="left:448.8px;top:4.0px;font-size:12px;font-weight:400;color:#000;letter-spacing:0.953px;">(/home/reinha...</div><div class="tab" style="left:555px;width:139px"></div><div class="t" style="left:587.2px;top:4.0px;font-size:12px;font-weight:400;color:#000;letter-spacing:1.053px;">(/home/reinha...</div><div class="tab" style="left:695px;width:138px;background:#b4b2b4;border-top:1px solid #303030;border-left:1px solid #303030;border-right:1px solid #fff;border-bottom:1px solid #fff"></div><div class="t" style="left:727.8px;top:4.0px;font-size:12px;font-weight:400;color:#000;letter-spacing:0.919px;">file:/home/rei...</div><div class="a" style="left:435px;top:245px;width:548px;height:388px;background:#cac6cc;border-top:1px solid #fff;border-left:1px solid #fff;border-right:1px solid #000;border-bottom:2px solid #000"></div><svg style="left:441px;top:250px" width="16" height="16" viewBox="0 0 16 16"><rect x="1" y="1" width="9" height="14" fill="#e0e0e0" stroke="#000" stroke-width="1.2"/>
<rect x="2" y="2" width="2" height="12" fill="#909090"/>
<path d="M6 4 L13 4 L15 6 L15 10 L6 10 Z" fill="#f0c070" stroke="#000" stroke-width="1.2"/>
<rect x="6" y="11" width="8" height="4" fill="#d0d0d0" stroke="#000" stroke-width="1"/></svg><svg style="left:461px;top:254px" width="15" height="9" viewBox="0 0 15 9"><path d="M0 4 L6 4" stroke="#5050a0" stroke-width="1.5"/><path d="M6 1 L8 3 L12 3 L12 1 L14 0 L14 8 L12 7 L12 5 L8 5 L6 7 Z" fill="#8080c0" stroke="#404080" stroke-width=".8"/></svg><div class="a" style="left:481px;top:249px;width:435px;height:18px;background:linear-gradient(90deg,#c0bec0 0%,#aaa8aa 35%,#858385 55%,#454345 75%,#000 92%);border-top:1px solid #404040;border-left:1px solid #404040;border-bottom:1px solid #fff;border-right:1px solid #fff"></div><div class="t" style="left:486.0px;top:251.0px;font-size:14px;font-weight:700;color:#000;letter-spacing:0.716px;">file:/home/reinhard/</div><div class="a" style="left:925px;top:256px;width:4px;height:3px;background:#5050a0"></div><div class="a" style="left:941px;top:252px;width:12px;height:12px;border:1.5px solid #505090"></div><svg style="left:963px;top:252px" width="12" height="12" viewBox="0 0 12 12"><path d="M0.5 0.5 L11.5 11.5 M11.5 0.5 L0.5 11.5" stroke="#505090" stroke-width="1.6"/></svg><div class="a" style="left:440px;top:269px;width:539px;height:51px;border-top:1px solid #fff;border-bottom:1px solid #303030"></div><div class="a" style="left:439px;top:269px;width:1px;height:50px;background:#fff"></div><svg style="left:441px;top:272px" width="6" height="46" shape-rendering="crispEdges"><rect x="0" y="1" width="1" height="1" fill="#000"/><rect x="1" y="2" width="1" height="1" fill="#fff"/><rect x="0" y="4" width="1" height="1" fill="#000"/><rect x="1" y="5" width="1" height="1" fill="#fff"/><rect x="0" y="7" width="1" height="1" fill="#000"/><rect x="1" y="8" width="1" height="1" fill="#fff"/><rect x="0" y="10" width="1" height="1" fill="#000"/><rect x="1" y="11" width="1" height="1" fill="#fff"/><rect x="0" y="13" width="1" height="1" fill="#000"/><rect x="1" y="14" width="1" height="1" fill="#fff"/><rect x="0" y="16" width="1" height="1" fill="#000"/><rect x="1" y="17" width="1" height="1" fill="#fff"/><rect x="0" y="19" width="1" height="1" fill="#000"/><rect x="1" y="20" width="1" height="1" fill="#fff"/><rect x="0" y="22" width="1" height="1" fill="#000"/><rect x="1" y="23" width="1" height="1" fill="#fff"/><rect x="0" y="25" width="1" height="1" fill="#000"/><rect x="1" y="26" width="1" height="1" fill="#fff"/><rect x="0" y="28" width="1" height="1" fill="#000"/><rect x="1" y="29" width="1" height="1" fill="#fff"/><rect x="0" y="31" width="1" height="1" fill="#000"/><rect x="1" y="32" width="1" height="1" fill="#fff"/><rect x="0" y="34" width="1" height="1" fill="#000"/><rect x="1" y="35" width="1" height="1" fill="#fff"/><rect x="0" y="37" width="1" height="1" fill="#000"/><rect x="1" y="38" width="1" height="1" fill="#fff"/><rect x="0" y="40" width="1" height="1" fill="#000"/><rect x="1" y="41" width="1" height="1" fill="#fff"/><rect x="0" y="43" width="1" height="1" fill="#000"/><rect x="1" y="44" width="1" height="1" fill="#fff"/><rect x="3" y="2" width="1" height="1" fill="#000"/><rect x="4" y="3" width="1" height="1" fill="#fff"/><rect x="3" y="5" width="1" height="1" fill="#000"/><rect x="4" y="6" width="1" height="1" fill="#fff"/><rect x="3" y="8" width="1" height="1" fill="#000"/><rect x="4" y="9" width="1" height="1" fill="#fff"/><rect x="3" y="11" width="1" height="1" fill="#000"/><rect x="4" y="12" width="1" height="1" fill="#fff"/><rect x="3" y="14" width="1" height="1" fill="#000"/><rect x="4" y="15" width="1" height="1" fill="#fff"/><rect x="3" y="17" width="1" height="1" fill="#000"/><rect x="4" y="18" width="1" height="1" fill="#fff"/><rect x="3" y="20" width="1" height="1" fill="#000"/><rect x="4" y="21" width="1" height="1" fill="#fff"/><rect x="3" y="23" width="1" height="1" fill="#000"/><rect x="4" y="24" width="1" height="1" fill="#fff"/><rect x="3" y="26" width="1" height="1" fill="#000"/><rect x="4" y="27" width="1" height="1" fill="#fff"/><rect x="3" y="29" width="1" height="1" fill="#000"/><rect x="4" y="30" width="1" height="1" fill="#fff"/><rect x="3" y="32" width="1" height="1" fill="#000"/><rect x="4" y="33" width="1" height="1" fill="#fff"/><rect x="3" y="35" width="1" height="1" fill="#000"/><rect x="4" y="36" width="1" height="1" fill="#fff"/><rect x="3" y="38" width="1" height="1" fill="#000"/><rect x="4" y="39" width="1" height="1" fill="#fff"/><rect x="3" y="41" width="1" height="1" fill="#000"/><rect x="4" y="42" width="1" height="1" fill="#fff"/><rect x="3" y="44" width="1" height="1" fill="#000"/><rect x="4" y="45" width="1" height="1" fill="#fff"/></svg><div class="a" style="left:447px;top:270px;width:1px;height:49px;background:#202020"></div><div class="a" style="left:978px;top:270px;width:1px;height:50px;background:#303030"></div><div class="t" style="left:462.5px;top:276.0px;font-size:12px;font-weight:400;color:#000;letter-spacing:1.150px;">Datei</div><div class="a" style="left:464px;top:288px;width:8px;height:1px;background:#000"></div><div class="t" style="left:518.2px;top:276.0px;font-size:12px;font-weight:400;color:#000;letter-spacing:0.889px;">Bearbeiten</div><div class="a" style="left:519px;top:288px;width:8px;height:1px;background:#000"></div><div class="t" style="left:607.6px;top:276.0px;font-size:12px;font-weight:400;color:#000;letter-spacing:0.817px;">Ansicht</div><div class="a" style="left:608px;top:288px;width:8px;height:1px;background:#000"></div><div class="t" style="left:674.0px;top:276.0px;font-size:12px;font-weight:400;color:#000;letter-spacing:0.700px;">Gehe zu</div><div class="a" style="left:674px;top:288px;width:8px;height:1px;background:#000"></div><div class="t" style="left:747.8px;top:276.0px;font-size:12px;font-weight:400;color:#000;letter-spacing:0.530px;">Lesezeichen</div><div class="a" style="left:749px;top:288px;width:8px;height:1px;background:#000"></div><div class="t" style="left:843.0px;top:276.0px;font-size:12px;font-weight:400;color:#000;letter-spacing:0.900px;">Einstellungen</div><div class="a" style="left:844px;top:288px;width:8px;height:1px;background:#000"></div><div class="t" style="left:463.8px;top:299.0px;font-size:12px;font-weight:400;color:#000;letter-spacing:1.150px;">Hilfe</div><div class="a" style="left:465px;top:311px;width:8px;height:1px;background:#000"></div><div class="a" style="left:440px;top:320px;width:539px;height:26px;border-top:1px solid #fff;border-bottom:1px solid #303030"></div><div class="a" style="left:439px;top:320px;width:1px;height:25px;background:#fff"></div><svg style="left:441px;top:322px" width="6" height="22" shape-rendering="crispEdges"><rect x="0" y="1" width="1" height="1" fill="#000"/><rect x="1" y="2" width="1" height="1" fill="#fff"/><rect x="0" y="4" width="1" height="1" fill="#000"/><rect x="1" y="5" width="1" height="1" fill="#fff"/><rect x="0" y="7" width="1" height="1" fill="#000"/><rect x="1" y="8" width="1" height="1" fill="#fff"/><rect x="0" y="10" width="1" height="1" fill="#000"/><rect x="1" y="11" width="1" height="1" fill="#fff"/><rect x="0" y="13" width="1" height="1" fill="#000"/><rect x="1" y="14" width="1" height="1" fill="#fff"/><rect x="0" y="16" width="1" height="1" fill="#000"/><rect x="1" y="17" width="1" height="1" fill="#fff"/><rect x="0" y="19" width="1" height="1" fill="#000"/><rect x="1" y="20" width="1" height="1" fill="#fff"/><rect x="3" y="2" width="1" height="1" fill="#000"/><rect x="4" y="3" width="1" height="1" fill="#fff"/><rect x="3" y="5" width="1" height="1" fill="#000"/><rect x="4" y="6" width="1" height="1" fill="#fff"/><rect x="3" y="8" width="1" height="1" fill="#000"/><rect x="4" y="9" width="1" height="1" fill="#fff"/><rect x="3" y="11" width="1" height="1" fill="#000"/><rect x="4" y="12" width="1" height="1" fill="#fff"/><rect x="3" y="14" width="1" height="1" fill="#000"/><rect x="4" y="15" width="1" height="1" fill="#fff"/><rect x="3" y="17" width="1" height="1" fill="#000"/><rect x="4" y="18" width="1" height="1" fill="#fff"/><rect x="3" y="20" width="1" height="1" fill="#000"/><rect x="4" y="21" width="1" height="1" fill="#fff"/></svg><div class="a" style="left:447px;top:321px;width:1px;height:24px;background:#202020"></div><svg style="left:461px;top:326px" width="13" height="14" viewBox="0 0 13 14"><path d="M6.5 0.8 L12 6.3 L9 6.3 L9 13.3 L4 13.3 L4 6.3 L1 6.3 Z" fill="#fff" stroke="#000" stroke-width="1.4" stroke-linejoin="miter"/></svg><svg style="left:491px;top:327px" width="14" height="14" viewBox="0 0 14 14"><path d="M0.3 6 L6.6 0.5 L6.6 3.2 L13.6 3.2 L13.6 9.5 L6.6 9.5 L6.6 13.4 Z" fill="#a4a4a4"/><path d="M7.5 13.4 L7.5 9.5 L13.6 9.5 L13.6 3.2" stroke="#fff" stroke-width="1.2" fill="none"/></svg><svg style="left:520px;top:327px" width="14" height="14" viewBox="0 0 14 14"><path d="M13 6 L7 0.5 L7 3.2 L0.2 3.2 L0.2 9.5 L7 9.5 L7 12.5 Z" fill="#a4a4a4"/><path d="M1 10.5 L7 10.5 M7 13.5 L13.5 7" stroke="#fff" stroke-width="1.2" fill="none"/></svg><svg style="left:547px;top:325px" width="16" height="15" viewBox="0 0 16 15"><path d="M8.2 0.6 L16 7.5 L14 7.5 L14 14.6 L1.6 14.6 L1.6 7.5 L0 7.5 Z" fill="#fff" stroke="#000" stroke-width="1.4"/><rect x="5.5" y="9" width="5" height="5.6" fill="#000"/><rect x="6.8" y="9.5" width="2.4" height="5" fill="#fff"/><path d="M2.5 1 L2.5 5" stroke="#000" stroke-width="1.4"/></svg><svg style="left:585px;top:325px" width="16" height="16" viewBox="0 0 16 16"><path d="M3.5 5.5 A5.5 5 0 0 1 12.5 4" stroke="#000" stroke-width="2" fill="none"/><path d="M12.5 10.5 A5.5 5 0 0 1 3.5 12" stroke="#000" stroke-width="2" fill="none"/><path d="M0.3 5.3 L7 5.3 L3.6 9 Z" fill="#000"/><path d="M15.7 10.7 L9 10.7 L12.4 7 Z" fill="#000"/></svg><svg style="left:624px;top:327px" width="15" height="14" viewBox="0 0 15 14"><path d="M0.8 0.8 H5.5 L7.2 2.5 V10 H0.8 Z" fill="#fff" stroke="#000" stroke-width="1.5"/><path d="M2.3 3.5 H5 M2.3 5.8 H5 M2.3 8 H5" stroke="#000" stroke-width="1.1"/><path d="M6.5 3.8 H12 L14.3 6 V13 H6.5 Z" fill="#fff" stroke="#000" stroke-width="1.5"/><path d="M8 6.8 H11 M8 9 H12.5 M8 11.2 H12.5" stroke="#000" stroke-width="1.1"/></svg><svg style="left:653px;top:327px" width="15" height="14" viewBox="0 0 15 14"><rect x="0.8" y="1.5" width="11.7" height="10.5" fill="#c8c8c8" stroke="#000" stroke-width="1.5"/><path d="M3.5 3.5 Q6 -0.5 9 3.5 Z" fill="#fff" stroke="#000" stroke-width="1.2"/><path d="M6.5 5.5 H11.5 L13.8 7.5 V13 H6.5 Z" fill="#fff" stroke="#000" stroke-width="1.5"/><path d="M8 8.5 H10.5 M8 10.8 H12" stroke="#000" stroke-width="1.1"/></svg><svg style="left:694px;top:327px" width="10" height="13" viewBox="0 0 10 13"><path d="M1 4.5 Q1 0.5 5 0.5 Q9.5 0.5 9.5 4 Q9.5 6.5 6.5 7.5 L6.5 9 L3.8 9 L3.8 6.5 Q6.5 5.5 6.5 4 Q6.5 2 5 2 Q4 2 4 3.5 Z" fill="#000090"/><rect x="3.6" y="10" width="3.2" height="2.6" fill="#000090"/></svg><svg style="left:731.5px;top:325px" width="12" height="17" viewBox="0 0 12 17"><path d="M1 1 H10 V15 H1 Z" fill="#a0a0a0"/><rect x="0" y="0" width="11" height="2.5" rx="1" fill="#a0a0a0"/><path d="M10.5 2.5 V6 L9.5 7 L10.5 8 V15.5 H3" stroke="#fff" stroke-width="1" fill="none"/></svg><svg style="left:952px;top:325px" width="22" height="19" viewBox="0 0 22 19"><polygon points="22.0,10.0 17.9,12.4 18.8,16.6 13.9,15.9 11.0,19.4 8.1,15.9 3.2,16.6 4.1,12.4 0.0,10.0 4.1,7.6 3.2,3.4 8.1,4.1 11.0,0.7 13.9,4.1 18.8,3.4 17.9,7.6" fill="#fff" stroke="#303030" stroke-width="1.2"/><circle cx="11" cy="10" r="2.5" fill="#303030"/></svg><div class="a" style="left:440px;top:346px;width:539px;height:26px;border-top:1px solid #fff;border-bottom:1px solid #303030"></div><div class="a" style="left:439px;top:346px;width:1px;height:25px;background:#fff"></div><svg style="left:441px;top:348px" width="6" height="22" shape-rendering="crispEdges"><rect x="0" y="1" width="1" height="1" fill="#000"/><rect x="1" y="2" width="1" height="1" fill="#fff"/><rect x="0" y="4" width="1" height="1" fill="#000"/><rect x="1" y="5" width="1" height="1" fill="#fff"/><rect x="0" y="7" width="1" height="1" fill="#000"/><rect x="1" y="8" width="1" height="1" fill="#fff"/><rect x="0" y="10" width="1" height="1" fill="#000"/><rect x="1" y="11" width="1" height="1" fill="#fff"/><rect x="0" y="13" width="1" height="1" fill="#000"/><rect x="1" y="14" width="1" height="1" fill="#fff"/><rect x="0" y="16" width="1" height="1" fill="#000"/><rect x="1" y="17" width="1" height="1" fill="#fff"/><rect x="0" y="19" width="1" height="1" fill="#000"/><rect x="1" y="20" width="1" height="1" fill="#fff"/><rect x="3" y="2" width="1" height="1" fill="#000"/><rect x="4" y="3" width="1" height="1" fill="#fff"/><rect x="3" y="5" width="1" height="1" fill="#000"/><rect x="4" y="6" width="1" height="1" fill="#fff"/><rect x="3" y="8" width="1" height="1" fill="#000"/><rect x="4" y="9" width="1" height="1" fill="#fff"/><rect x="3" y="11" width="1" height="1" fill="#000"/><rect x="4" y="12" width="1" height="1" fill="#fff"/><rect x="3" y="14" width="1" height="1" fill="#000"/><rect x="4" y="15" width="1" height="1" fill="#fff"/><rect x="3" y="17" width="1" height="1" fill="#000"/><rect x="4" y="18" width="1" height="1" fill="#fff"/><rect x="3" y="20" width="1" height="1" fill="#000"/><rect x="4" y="21" width="1" height="1" fill="#fff"/></svg><div class="a" style="left:447px;top:347px;width:1px;height:24px;background:#202020"></div><div class="t" style="left:454.9px;top:353.0px;font-size:12px;font-weight:400;color:#000;letter-spacing:0.440px;">Seite:</div><div class="a" style="left:491px;top:348px;width:487px;height:23px;background:#fff;border-top:2px solid #000;border-left:2px solid #000;border-bottom:1px solid #c0c0c0;border-right:1px solid #c0c0c0"></div><div class="t" style="left:495.9px;top:352.0px;font-size:12px;font-weight:400;color:#000;letter-spacing:1.211px;">file:/home/reinhard/</div><div class="a" style="left:442px;top:372px;width:537px;height:241px;background:#fdfcfd;border-left:1px solid #303030;border-top:1px solid #303030"></div><div class="a" style="left:963px;top:372px;width:16px;height:241px;background:#a8a6a8;border-left:1px solid #202020;border-right:1px solid #f0f0f0"></div><div class="a" style="left:964px;top:386px;width:13px;height:92px;background:#cac6cc;border-top:1px solid #fff;border-left:2px solid #fff;border-right:1px solid #202020;border-bottom:1px solid #404040"></div><svg style="left:964px;top:373px" width="13" height="13" viewBox="0 0 13 13"><path d="M1.5 12 L6.5 1.5 L11.5 12 Z" fill="#d8d8d8"/><path d="M1.5 12 L6.5 1.5" stroke="#fff" stroke-width="1.5"/><path d="M6.5 1.5 L11.5 12 L1.5 12" stroke="#202020" stroke-width="1.2" fill="none"/></svg><svg style="left:964px;top:599px" width="13" height="13" viewBox="0 0 13 13"><path d="M1.5 1.5 L6.5 12 L11.5 1.5 Z" fill="#d8d8d8"/><path d="M1.5 1.5 L6.5 12 M1.5 1.5 L11.5 1.5" stroke="#fff" stroke-width="1.5"/><path d="M6.5 12 L11.5 1.5" stroke="#202020" stroke-width="1.2"/></svg><div class="a" style="left:443px;top:373px;width:520px;height:240px;overflow:hidden"><svg style="left:41px;top:10px" width="32" height="32" viewBox="0 0 32 32"><path d="M1 9 L14 3 L28 8 L15 14 Z" fill="#c07038" stroke="#301000" stroke-width="1"/>
<path d="M1 9 L15 14 L15 18 L1 13 Z" fill="#a05020" stroke="#301000" stroke-width="1"/>
<path d="M15 14 L28 8 L28 12 L15 18 Z" fill="#804018" stroke="#301000" stroke-width="1"/>
<path d="M2 13 L8 15.5 L8 27 L2 24.5 Z" fill="#a85828" stroke="#301000" stroke-width="1"/>
<path d="M9 16 L15 18 L15 30 L9 28 Z" fill="#a85828" stroke="#301000" stroke-width="1"/>
<path d="M15 18 L20 16 L20 28 L15 30 Z" fill="#804018" stroke="#301000" stroke-width="1"/>
<path d="M8 6 L13 4 L16 8 L11 10 Z" fill="#f0e0a0" stroke="#604000" stroke-width=".8"/>
<circle cx="20" cy="9" r="2.2" fill="#2040e0" stroke="#000" stroke-width=".6"/>
<path d="M20 8 L24 2 M22 0 L27 4" stroke="#2040c0" stroke-width="2"/></svg><div class="t" style="left:30.1px;top:43.0px;font-size:12px;font-weight:400;color:#e80000;letter-spacing:0.400px;">Desktop/</div><div class="a" style="left:31.1px;top:55px;width:48.8px;height:1px;background:#e80000"></div><svg style="left:141px;top:10px" width="32" height="32" viewBox="0 0 32 32"><path d="M2.5 3 L5 0.5 L18 4.5 L19 6 L24.5 7.5 L26 9 L26 31 L24 31.5 L2.5 21.5 Z" fill="url(#gfold)" stroke="#000" stroke-width="1.1"/>
<path d="M5 1.6 L18 5.6 L19.3 7 L24.3 8.6 L25 10 L25 31" stroke="#f0a850" stroke-width="1.8" fill="none"/>
<path d="M26.5 26 L31 29.5 L26.5 31 Z" fill="#000"/></svg><div class="t" style="left:141.3px;top:43.0px;font-size:12px;font-weight:400;color:#e80000;letter-spacing:0.800px;">Mail/</div><div class="a" style="left:142.3px;top:55px;width:27.2px;height:1px;background:#e80000"></div><svg style="left:241px;top:10px" width="32" height="32" viewBox="0 0 32 32"><path d="M2.5 3 L5 0.5 L18 4.5 L19 6 L24.5 7.5 L26 9 L26 31 L24 31.5 L2.5 21.5 Z" fill="url(#gfold)" stroke="#000" stroke-width="1.1"/>
<path d="M5 1.6 L18 5.6 L19.3 7 L24.3 8.6 L25 10 L25 31" stroke="#f0a850" stroke-width="1.8" fill="none"/>
<path d="M26.5 26 L31 29.5 L26.5 31 Z" fill="#000"/></svg><div class="t" style="left:227.1px;top:43.0px;font-size:12px;font-weight:400;color:#e80000;letter-spacing:0.814px;">MyMusic/</div><div class="a" style="left:228.1px;top:55px;width:55.7px;height:1px;background:#e80000"></div><svg style="left:341px;top:10px" width="32" height="32" viewBox="0 0 32 32"><path d="M2.5 3 L5 0.5 L18 4.5 L19 6 L24.5 7.5 L26 9 L26 31 L24 31.5 L2.5 21.5 Z" fill="url(#gfold)" stroke="#000" stroke-width="1.1"/>
<path d="M5 1.6 L18 5.6 L19.3 7 L24.3 8.6 L25 10 L25 31" stroke="#f0a850" stroke-width="1.8" fill="none"/>
<path d="M26.5 26 L31 29.5 L26.5 31 Z" fill="#000"/></svg><div class="t" style="left:328.3px;top:43.0px;font-size:12px;font-weight:400;color:#e80000;letter-spacing:0.350px;">autosave/</div><div class="a" style="left:328.3px;top:55px;width:54.8px;height:1px;background:#e80000"></div><svg style="left:441px;top:10px" width="32" height="32" viewBox="0 0 32 32"><path d="M2.5 3 L5 0.5 L18 4.5 L19 6 L24.5 7.5 L26 9 L26 31 L24 31.5 L2.5 21.5 Z" fill="url(#gfold)" stroke="#000" stroke-width="1.1"/>
<path d="M5 1.6 L18 5.6 L19.3 7 L24.3 8.6 L25 10 L25 31" stroke="#f0a850" stroke-width="1.8" fill="none"/>
<path d="M26.5 26 L31 29.5 L26.5 31 Z" fill="#000"/></svg><div class="t" style="left:442.2px;top:43.0px;font-size:12px;font-weight:400;color:#e80000;letter-spacing:0.725px;">leer/</div><div class="a" style="left:443.2px;top:55px;width:24.9px;height:1px;background:#e80000"></div><svg style="left:41px;top:76px" width="32" height="32" viewBox="0 0 32 32"><path d="M2.5 3 L5 0.5 L18 4.5 L19 6 L24.5 7.5 L26 9 L26 31 L24 31.5 L2.5 21.5 Z" fill="url(#gfold)" stroke="#000" stroke-width="1.1"/>
<path d="M5 1.6 L18 5.6 L19.3 7 L24.3 8.6 L25 10 L25 31" stroke="#f0a850" stroke-width="1.8" fill="none"/>
<path d="M26.5 26 L31 29.5 L26.5 31 Z" fill="#000"/><path d="M9 2.5 L13 3.8 L13 25.5 L9 23.5 Z" fill="#a08020" stroke="#403000" stroke-width=".8"/>
<rect x="8" y="12" width="6" height="6" fill="#f0d040" stroke="#403000" stroke-width=".8"/></svg><div class="t" style="left:28.2px;top:109.0px;font-size:12px;font-weight:400;color:#e80000;letter-spacing:0.388px;">linuxcmd/</div><div class="a" style="left:29.2px;top:121px;width:53.1px;height:1px;background:#e80000"></div><svg style="left:141px;top:76px" width="32" height="32" viewBox="0 0 32 32"><path d="M2.5 3 L5 0.5 L18 4.5 L19 6 L24.5 7.5 L26 9 L26 31 L24 31.5 L2.5 21.5 Z" fill="url(#gfold)" stroke="#000" stroke-width="1.1"/>
<path d="M5 1.6 L18 5.6 L19.3 7 L24.3 8.6 L25 10 L25 31" stroke="#f0a850" stroke-width="1.8" fill="none"/>
<path d="M26.5 26 L31 29.5 L26.5 31 Z" fill="#000"/></svg><div class="t" style="left:133.3px;top:109.0px;font-size:12px;font-weight:400;color:#e80000;letter-spacing:0.367px;">netscap</div><div class="a" style="left:134.3px;top:121px;width:43.2px;height:1px;background:#e80000"></div><div class="t" style="left:134.3px;top:124.0px;font-size:12px;font-weight:400;color:#e80000;letter-spacing:0.213px;">6install/</div><div class="a" style="left:134.3px;top:136px;width:42.7px;height:1px;background:#e80000"></div><svg style="left:241px;top:76px" width="32" height="32" viewBox="0 0 32 32"><path d="M2.5 3 L5 0.5 L18 4.5 L19 6 L24.5 7.5 L26 9 L26 31 L24 31.5 L2.5 21.5 Z" fill="url(#gfold)" stroke="#000" stroke-width="1.1"/>
<path d="M5 1.6 L18 5.6 L19.3 7 L24.3 8.6 L25 10 L25 31" stroke="#f0a850" stroke-width="1.8" fill="none"/>
<path d="M26.5 26 L31 29.5 L26.5 31 Z" fill="#000"/></svg><div class="t" style="left:224.2px;top:109.0px;font-size:12px;font-weight:400;color:#e80000;letter-spacing:0.356px;">netscape6/</div><div class="a" style="left:225.2px;top:121px;width:61.2px;height:1px;background:#e80000"></div><svg style="left:341px;top:76px" width="32" height="32" viewBox="0 0 32 32"><path d="M2.5 3 L5 0.5 L18 4.5 L19 6 L24.5 7.5 L26 9 L26 31 L24 31.5 L2.5 21.5 Z" fill="url(#gfold)" stroke="#000" stroke-width="1.1"/>
<path d="M5 1.6 L18 5.6 L19.3 7 L24.3 8.6 L25 10 L25 31" stroke="#f0a850" stroke-width="1.8" fill="none"/>
<path d="M26.5 26 L31 29.5 L26.5 31 Z" fill="#000"/></svg><div class="t" style="left:335.0px;top:109.0px;font-size:12px;font-weight:400;color:#e80000;letter-spacing:0.333px;">nsmail/</div><div class="a" style="left:336.0px;top:121px;width:39.0px;height:1px;background:#e80000"></div><svg style="left:441px;top:76px" width="32" height="32" viewBox="0 0 32 32"><path d="M2.5 3 L5 0.5 L18 4.5 L19 6 L24.5 7.5 L26 9 L26 31 L24 31.5 L2.5 21.5 Z" fill="url(#gfold)" stroke="#000" stroke-width="1.1"/>
<path d="M5 1.6 L18 5.6 L19.3 7 L24.3 8.6 L25 10 L25 31" stroke="#f0a850" stroke-width="1.8" fill="none"/>
<path d="M26.5 26 L31 29.5 L26.5 31 Z" fill="#000"/></svg><div class="t" style="left:432.1px;top:109.0px;font-size:12px;font-weight:400;color:#e80000;letter-spacing:0.325px;">office52/</div><div class="a" style="left:432.1px;top:121px;width:47.6px;height:1px;background:#e80000"></div><svg style="left:41px;top:155px" width="32" height="32" viewBox="0 0 32 32"><path d="M2.5 3 L5 0.5 L18 4.5 L19 6 L24.5 7.5 L26 9 L26 31 L24 31.5 L2.5 21.5 Z" fill="url(#gfold)" stroke="#000" stroke-width="1.1"/>
<path d="M5 1.6 L18 5.6 L19.3 7 L24.3 8.6 L25 10 L25 31" stroke="#f0a850" stroke-width="1.8" fill="none"/>
<path d="M26.5 26 L31 29.5 L26.5 31 Z" fill="#000"/></svg><div class="t" style="left:16.3px;top:188.0px;font-size:12px;font-weight:400;color:#e80000;letter-spacing:0.415px;">privat puretec</div><div class="a" style="left:17.3px;top:200px;width:76.4px;height:1px;background:#e80000"></div><div class="t" style="left:53.4px;top:203.0px;font-size:12px;font-weight:400;color:#e80000;letter-spacing:2.400px;">/</div><div class="a" style="left:53.4px;top:215px;width:5.4px;height:1px;background:#e80000"></div><svg style="left:141px;top:155px" width="32" height="32" viewBox="0 0 32 32"><path d="M2.5 3 L5 0.5 L18 4.5 L19 6 L24.5 7.5 L26 9 L26 31 L24 31.5 L2.5 21.5 Z" fill="url(#gfold)" stroke="#000" stroke-width="1.1"/>
<path d="M5 1.6 L18 5.6 L19.3 7 L24.3 8.6 L25 10 L25 31" stroke="#f0a850" stroke-width="1.8" fill="none"/>
<path d="M26.5 26 L31 29.5 L26.5 31 Z" fill="#000"/></svg><div class="t" style="left:122.7px;top:188.0px;font-size:12px;font-weight:400;color:#e80000;letter-spacing:0.056px;">programme/</div><div class="a" style="left:123.7px;top:200px;width:64.5px;height:1px;background:#e80000"></div><svg style="left:241px;top:155px" width="32" height="32" viewBox="0 0 32 32"><path d="M2.5 3 L5 0.5 L18 4.5 L19 6 L24.5 7.5 L26 9 L26 31 L24 31.5 L2.5 21.5 Z" fill="url(#gfold)" stroke="#000" stroke-width="1.1"/>
<path d="M5 1.6 L18 5.6 L19.3 7 L24.3 8.6 L25 10 L25 31" stroke="#f0a850" stroke-width="1.8" fill="none"/>
<path d="M26.5 26 L31 29.5 L26.5 31 Z" fill="#000"/></svg><div class="t" style="left:217.4px;top:188.0px;font-size:12px;font-weight:400;color:#e80000;letter-spacing:0.350px;">setiathome-3.</div><div class="a" style="left:217.4px;top:200px;width:76.2px;height:1px;background:#e80000"></div><div class="t" style="left:228.0px;top:203.0px;font-size:12px;font-weight:400;color:#e80000;letter-spacing:0.800px;">0.i386-pc</div><div class="a" style="left:228.0px;top:215px;width:55.4px;height:1px;background:#e80000"></div><div class="t" style="left:224.3px;top:218.0px;font-size:12px;font-weight:400;color:#e80000;letter-spacing:1.167px;">-linux-gnu</div><div class="a" style="left:224.3px;top:230px;width:62.5px;height:1px;background:#e80000"></div><div class="t" style="left:224.0px;top:233.0px;font-size:12px;font-weight:400;color:#e80000;letter-spacing:0.500px;">gnulibc2.1/</div><div class="a" style="left:224.0px;top:245px;width:63.0px;height:1px;background:#e80000"></div><svg style="left:341px;top:155px" width="32" height="32" viewBox="0 0 32 32"><path d="M2.5 3 L5 0.5 L18 4.5 L19 6 L24.5 7.5 L26 9 L26 31 L24 31.5 L2.5 21.5 Z" fill="url(#gfold)" stroke="#000" stroke-width="1.1"/>
<path d="M5 1.6 L18 5.6 L19.3 7 L24.3 8.6 L25 10 L25 31" stroke="#f0a850" stroke-width="1.8" fill="none"/>
<path d="M26.5 26 L31 29.5 L26.5 31 Z" fill="#000"/></svg><div class="t" style="left:317.5px;top:188.0px;font-size:12px;font-weight:400;color:#e80000;letter-spacing:0.350px;">setiathome-3.</div><div class="a" style="left:317.5px;top:200px;width:76.2px;height:1px;background:#e80000"></div><div class="t" style="left:328.3px;top:203.0px;font-size:12px;font-weight:400;color:#e80000;letter-spacing:0.775px;">0.i386-pc</div><div class="a" style="left:328.3px;top:215px;width:55.2px;height:1px;background:#e80000"></div><div class="t" style="left:339.5px;top:218.0px;font-size:12px;font-weight:400;color:#e80000;letter-spacing:1.000px;">-linux</div><div class="a" style="left:339.5px;top:230px;width:34.0px;height:1px;background:#e80000"></div><div class="t" style="left:328.0px;top:233.0px;font-size:12px;font-weight:400;color:#e80000;letter-spacing:1.143px;">gnulibc1</div><div class="a" style="left:328.0px;top:245px;width:52.0px;height:1px;background:#e80000"></div><svg style="left:441px;top:155px" width="32" height="32" viewBox="0 0 32 32"><path d="M2.5 3 L5 0.5 L18 4.5 L19 6 L24.5 7.5 L26 9 L26 31 L24 31.5 L2.5 21.5 Z" fill="url(#gfold)" stroke="#000" stroke-width="1.1"/>
<path d="M5 1.6 L18 5.6 L19.3 7 L24.3 8.6 L25 10 L25 31" stroke="#f0a850" stroke-width="1.8" fill="none"/>
<path d="M26.5 26 L31 29.5 L26.5 31 Z" fill="#000"/></svg><div class="t" style="left:434.2px;top:188.0px;font-size:12px;font-weight:400;color:#e80000;letter-spacing:0.417px;">update/</div><div class="a" style="left:435.2px;top:200px;width:41.5px;height:1px;background:#e80000"></div></div><div class="a" style="left:439px;top:613px;width:543px;height:18px;border-top:1px solid #303030;border-left:1px solid #303030;border-bottom:1px solid #fff"></div><div class="t" style="left:442.5px;top:615.0px;font-size:12px;font-weight:400;color:#000;letter-spacing:0.920px;">Dokument: Fertig</div><div class="a" style="left:928px;top:633px;width:35px;height:1px;background:#101010"></div><div class="a" style="left:789px;top:633px;width:20px;height:1px;background:#202020"></div><div class="a" style="left:890px;top:23px;width:132px;height:127px;background:#cac6cc;border-top:1px solid #fff;border-left:1px solid #fff;border-right:1px solid #000;border-bottom:1px solid #000"></div><div class="a" style="left:898px;top:35px;width:12px;height:2px;background:#6060a0"></div><svg style="left:916px;top:31px" width="15" height="9" viewBox="0 0 15 9"><path d="M0 4 L6 4" stroke="#5050a0" stroke-width="1.5"/><path d="M6 1 L8 3 L12 3 L12 1 L14 0 L14 8 L12 7 L12 5 L8 5 L6 7 Z" fill="#8080c0" stroke="#404080" stroke-width=".8"/></svg><div class="t" style="left:936.5px;top:30.0px;font-size:13px;font-weight:700;color:#fff;letter-spacing:0.500px;">ternet</div><div class="a" style="left:986px;top:34px;width:3px;height:3px;background:#6060a0"></div><svg style="left:1003px;top:30px" width="12" height="12" viewBox="0 0 12 12"><path d="M0.5 0.5 L11.5 11.5 M11.5 0.5 L0.5 11.5" stroke="#505090" stroke-width="1.6"/></svg><div class="t" style="left:905.0px;top:57.4px;font-size:12px;font-weight:400;color:#000;letter-spacing:1.067px;">Internet Einwahl</div><div class="t" style="left:920.0px;top:77.0px;font-size:12px;font-weight:400;color:#000;letter-spacing:1.000px;">Hier klicken</div><svg style="left:944px;top:107px" width="18" height="17" viewBox="0 0 18 17"><path d="M6.5 12.5 L1.5 17.5" stroke="#000" stroke-width="3"/><path d="M6.5 12.5 L1.5 17.5" stroke="#fff" stroke-width="1"/>
<path d="M10 5 L13.5 1.8 M13.5 8.5 L17 5.3" stroke="#000" stroke-width="2.6"/>
<path d="M10 5 L13.5 1.8 M13.5 8.5 L17 5.3" stroke="#f8f000" stroke-width="1.6"/>
<path d="M4.3 7.4 L7.6 4.25 L9.4 4.7 L14.75 9.9 L14.4 12.4 L11.3 15.5 L9 15.2 L4 11 Z" fill="#e0e0f0" stroke="#000" stroke-width="1.3"/>
</svg><div class="a" style="left:980px;top:151px;width:43px;height:75px;background:#cac6cc;border-top:1px solid #fff;border-left:1px solid #fff;border-right:1px solid #000;border-bottom:2px solid #000"></div><div class="a" style="left:981px;top:157px;width:3px;height:13px;border:1px solid #505090;border-right:none"></div><svg style="left:986px;top:156px" width="16" height="16" viewBox="0 0 16 16"><path d="M0 3.5 H7 M0 6.5 H7 M0 9.5 H7 M0 12.5 H7" stroke="#000" stroke-width="1.3"/>
<path d="M6 6 L11 1 L14 0 L14 16 L5 16 L5 8 Z" fill="#000"/>
<path d="M14 3.5 H16 M14 6.5 H16 M14 9.5 H16 M14 12.5 H16" stroke="#000" stroke-width="1.3"/>
<path d="M0 15.3 H16" stroke="#000" stroke-width="1.6"/>
<path d="M4 13.5 L6 12 L6 14 Z M9 13.5 L12 12 L12 14 Z" fill="#fff"/>
</svg><svg style="left:1003.5px;top:158.5px" width="12" height="11" viewBox="0 0 12 11"><path d="M0.5 0.5 L11 10.5 M11 0.5 L0.5 10.5" stroke="#505090" stroke-width="1.5"/></svg><div class="a" style="left:1019px;top:161px;width:1px;height:8px;background:#505090"></div><div class="a" style="left:983px;top:174px;width:37px;height:50px;border-left:1px solid #808080;border-top:1px solid #808080"></div><div class="a" style="left:984px;top:175px;width:35.5px;height:18px;background:#fff"></div><div class="t" style="left:987px;top:176px;font-weight:bold;font-size:12px;font-family:'Liberation Serif';letter-spacing:-0.3px">unin:</div><div class="a" style="left:984px;top:193px;width:35.5px;height:29px;background:#00f000"></div><svg style="left:8px;top:3px" width="16" height="16" viewBox="0 0 16 16"><path d="M0 3.5 H7 M0 6.5 H7 M0 9.5 H7 M0 12.5 H7" stroke="#000" stroke-width="1.3"/>
<path d="M6 6 L11 1 L14 0 L14 16 L5 16 L5 8 Z" fill="#000"/>
<path d="M14 3.5 H16 M14 6.5 H16 M14 9.5 H16 M14 12.5 H16" stroke="#000" stroke-width="1.3"/>
<path d="M0 15.3 H16" stroke="#000" stroke-width="1.6"/>
<path d="M4 13.5 L6 12 L6 14 Z M9 13.5 L12 12 L12 14 Z" fill="#fff"/>
</svg><div class="a" style="left:152px;top:8px;width:6px;height:6px;border-radius:50%;background:#000"></div><div class="a" style="left:153px;top:9px;width:3px;height:3px;border-radius:50%;background:#fff"></div><svg style="left:286px;top:3px" width="16" height="16" viewBox="0 0 16 16"><rect x="0.5" y="1.5" width="15" height="13" fill="#fff" stroke="#000" stroke-width="1.2"/><rect x="2.5" y="3.5" width="11" height="8" fill="#000"/><rect x="4" y="5" width="1" height="2" fill="#a0f0f0"/><rect x="6" y="6" width="1" height="1" fill="#a0f0f0"/></svg><svg style="left:425px;top:3px" width="16" height="15" viewBox="0 0 16 15"><path d="M1 10 L8 14 L15 9 L8 6 Z" fill="#fff" stroke="#000"/><path d="M1 10 L3 3 L9 0 L8 6 Z" fill="#208020" stroke="#000" stroke-width=".8"/><path d="M7 10 L14 2 L15 4 L9 11 Z" fill="#f0e0a0" stroke="#000" stroke-width=".8"/></svg><svg style="left:564px;top:3px" width="16" height="15" viewBox="0 0 16 15"><path d="M1 10 L8 14 L15 9 L8 6 Z" fill="#fff" stroke="#000"/><path d="M1 10 L3 3 L9 0 L8 6 Z" fill="#208020" stroke="#000" stroke-width=".8"/><path d="M7 10 L14 2 L15 4 L9 11 Z" fill="#f0e0a0" stroke="#000" stroke-width=".8"/></svg><svg style="left:704px;top:3px" width="16" height="16" viewBox="0 0 16 16"><rect x="1" y="1" width="9" height="14" fill="#e0e0e0" stroke="#000" stroke-width="1.2"/>
<rect x="2" y="2" width="2" height="12" fill="#909090"/>
<path d="M6 4 L13 4 L15 6 L15 10 L6 10 Z" fill="#f0c070" stroke="#000" stroke-width="1.2"/>
<rect x="6" y="11" width="8" height="4" fill="#d0d0d0" stroke="#000" stroke-width="1"/></svg><div class="a" style="left:0;top:723px;width:1024px;height:45px;background:linear-gradient(180deg,#d2d0de 0%,#bebcd8 30%,#b0aed2 55%,#aaa8c4 80%,#a8a4b4 100%);border-top:1px solid #f4f4f4;border-bottom:1px solid #303030"></div><div class="a" style="left:0px;top:724px;width:11px;height:43px;background:#dcdae0;border-left:1px solid #fff"></div><svg style="left:3px;top:725px" width="7" height="42" shape-rendering="crispEdges"><rect x="1" y="1" width="1" height="1" fill="#000"/><rect x="2" y="2" width="1" height="1" fill="#fff"/><rect x="1" y="4" width="1" height="1" fill="#000"/><rect x="2" y="5" width="1" height="1" fill="#fff"/><rect x="1" y="7" width="1" height="1" fill="#000"/><rect x="2" y="8" width="1" height="1" fill="#fff"/><rect x="1" y="10" width="1" height="1" fill="#000"/><rect x="2" y="11" width="1" height="1" fill="#fff"/><rect x="1" y="13" width="1" height="1" fill="#000"/><rect x="2" y="14" width="1" height="1" fill="#fff"/><rect x="1" y="16" width="1" height="1" fill="#000"/><rect x="2" y="17" width="1" height="1" fill="#fff"/><rect x="1" y="19" width="1" height="1" fill="#000"/><rect x="2" y="20" width="1" height="1" fill="#fff"/><rect x="1" y="22" width="1" height="1" fill="#000"/><rect x="2" y="23" width="1" height="1" fill="#fff"/><rect x="1" y="25" width="1" height="1" fill="#000"/><rect x="2" y="26" width="1" height="1" fill="#fff"/><rect x="1" y="28" width="1" height="1" fill="#000"/><rect x="2" y="29" width="1" height="1" fill="#fff"/><rect x="1" y="31" width="1" height="1" fill="#000"/><rect x="2" y="32" width="1" height="1" fill="#fff"/><rect x="1" y="34" width="1" height="1" fill="#000"/><rect x="2" y="35" width="1" height="1" fill="#fff"/><rect x="1" y="37" width="1" height="1" fill="#000"/><rect x="2" y="38" width="1" height="1" fill="#fff"/><rect x="1" y="40" width="1" height="1" fill="#000"/><rect x="2" y="41" width="1" height="1" fill="#fff"/><rect x="4" y="2" width="1" height="1" fill="#000"/><rect x="5" y="3" width="1" height="1" fill="#fff"/><rect x="4" y="5" width="1" height="1" fill="#000"/><rect x="5" y="6" width="1" height="1" fill="#fff"/><rect x="4" y="8" width="1" height="1" fill="#000"/><rect x="5" y="9" width="1" height="1" fill="#fff"/><rect x="4" y="11" width="1" height="1" fill="#000"/><rect x="5" y="12" width="1" height="1" fill="#fff"/><rect x="4" y="14" width="1" height="1" fill="#000"/><rect x="5" y="15" width="1" height="1" fill="#fff"/><rect x="4" y="17" width="1" height="1" fill="#000"/><rect x="5" y="18" width="1" height="1" fill="#fff"/><rect x="4" y="20" width="1" height="1" fill="#000"/><rect x="5" y="21" width="1" height="1" fill="#fff"/><rect x="4" y="23" width="1" height="1" fill="#000"/><rect x="5" y="24" width="1" height="1" fill="#fff"/><rect x="4" y="26" width="1" height="1" fill="#000"/><rect x="5" y="27" width="1" height="1" fill="#fff"/><rect x="4" y="29" width="1" height="1" fill="#000"/><rect x="5" y="30" width="1" height="1" fill="#fff"/><rect x="4" y="32" width="1" height="1" fill="#000"/><rect x="5" y="33" width="1" height="1" fill="#fff"/><rect x="4" y="35" width="1" height="1" fill="#000"/><rect x="5" y="36" width="1" height="1" fill="#fff"/><rect x="4" y="38" width="1" height="1" fill="#000"/><rect x="5" y="39" width="1" height="1" fill="#fff"/></svg><div class="a" style="left:3px;top:740px;width:7px;height:11px;background:#dcdae0"></div><svg style="left:4px;top:742px" width="5" height="8" viewBox="0 0 5 8"><path d="M4 0 L0 4 L4 8 Z" fill="#000"/></svg><div class="a" style="left:11px;top:724px;width:1px;height:43px;background:#404040"></div><svg style="left:17px;top:729px" width="32" height="32" viewBox="0 0 32 32"><path d="M25.28 15.31 L29.35 15.41 L29.35 19.59 L25.28 19.69 L24.67 21.68 L23.67 23.58 L26.48 26.52 L23.52 29.48 L20.58 26.67 L18.74 27.65 L16.69 28.28 L16.59 32.35 L12.41 32.35 L12.31 28.28 L10.32 27.67 L8.42 26.67 L5.48 29.48 L2.52 26.52 L5.33 23.58 L4.35 21.74 L3.72 19.69 L-0.35 19.59 L-0.35 15.41 L3.72 15.31 L4.33 13.32 L5.33 11.42 L2.52 8.48 L5.48 5.52 L8.42 8.33 L10.26 7.35 L12.31 6.72 L12.41 2.65 L16.59 2.65 L16.69 6.72 L18.68 7.33 L20.58 8.33 L23.52 5.52 L26.48 8.48 L23.67 11.42 L24.65 13.26 Z" fill="#f4f4f4" stroke="#000" stroke-width="1.2"/>
<circle cx="14.5" cy="17.5" r="8" fill="#f0f0f0" stroke="#c0c0c0" stroke-width="1"/>
<circle cx="15.0" cy="18.5" r="6" fill="#e8a040"/>
<circle cx="13.5" cy="17.5" r="4" fill="#f8e0b0"/>
<path d="M12 0.5 L18 0.5 L18 11 L26 0.5 L31.5 0.5 L22 13 L31 22 L26 24.5 L18 15 L18 22.5 L12 22.5 Z" fill="#fff" stroke="#000" stroke-width="1.3"/>
</svg><svg style="left:46px;top:726px" width="7" height="4" viewBox="0 0 7 4"><path d="M0 4 L3.3 0 L6.6 4 Z" fill="#000"/></svg><svg style="left:60px;top:729px" width="32" height="32" viewBox="0 0 32 32"><path d="M12.99 4.28 L13.11 0.69 L17.89 0.69 L18.01 4.28 L19.87 4.86 L21.66 5.79 L24.28 3.34 L27.66 6.72 L25.21 9.34 L26.11 11.07 L26.72 12.99 L30.31 13.11 L30.31 17.89 L26.72 18.01 L26.14 19.87 L25.21 21.66 L27.66 24.28 L24.28 27.66 L21.66 25.21 L19.93 26.11 L18.01 26.72 L17.89 30.31 L13.11 30.31 L12.99 26.72 L11.13 26.14 L9.34 25.21 L6.72 27.66 L3.34 24.28 L5.79 21.66 L4.89 19.93 L4.28 18.01 L0.69 17.89 L0.69 13.11 L4.28 12.99 L4.86 11.13 L5.79 9.34 L3.34 6.72 L6.72 3.34 L9.34 5.79 L11.07 4.89 Z" fill="#f0f0f0" stroke="#202020" stroke-width="1.2"/>
<circle cx="15.5" cy="15.5" r="10.5" fill="#e8e8e8" stroke="#909090" stroke-width="1"/>
<circle cx="15.5" cy="15.5" r="8.3" fill="#50a020"/>
<path d="M8.5 17.5 Q15.5 20.5 22.5 16.5" stroke="#c0e8a0" stroke-width="1.2" fill="none"/>
<circle cx="17.5" cy="13.5" r="2.6" fill="none" stroke="#c0e8a0" stroke-width="1"/>
</svg><svg style="left:89px;top:726px" width="7" height="4" viewBox="0 0 7 4"><path d="M0 4 L3.5 0 L7 4 Z" fill="#000"/></svg><svg style="left:106px;top:729px" width="32" height="32" viewBox="0 0 32 32"><path d="M1 3.5 L4 0.5 L19 5 L20.5 7 L24 8 L25 10 L25 30.5 L1 22.5 Z" fill="url(#gfold)" stroke="#000" stroke-width="1.2"/>
<path d="M4 1.5 L19 6 L20.5 8 L23.5 9 L24 11 L24 30" stroke="#f0a850" stroke-width="1.8" fill="none"/>
<path d="M11 14 L18.5 21.5 L16.5 21.5 L16.5 27.5 L5.5 27.5 L5.5 21.5 L3.5 21.5 Z" fill="#fff" stroke="#000" stroke-width="1.4"/>
<rect x="9.3" y="22.5" width="3" height="5" fill="#000"/>
<path d="M26 26 L29.5 30 L26 31 Z" fill="#000"/>
</svg><div class="a" style="left:143px;top:723px;width:21px;height:22px;background:#cac6cc;border-top:1px solid #fff;border-left:1px solid #fff;border-bottom:2px solid #303030;border-right:2px solid #303030"></div><div class="a" style="left:143px;top:745px;width:21px;height:22px;background:#cac6cc;border-top:1px solid #fff;border-left:1px solid #fff;border-bottom:2px solid #303030;border-right:2px solid #303030"></div><svg style="left:147px;top:727px" width="14" height="14" viewBox="0 0 14 14"><path d="M2 2 L12 12 M12 2 L2 12" stroke="#000" stroke-width="2"/><path d="M3 3 L11 11" stroke="#fff" stroke-width=".8"/></svg><svg style="left:147px;top:749px" width="14" height="16" viewBox="0 0 14 16"><path d="M4 7 V4 A3 3 0 0 1 10 4 V7" stroke="#000" stroke-width="1.5" fill="none"/><rect x="1.5" y="7" width="11" height="8" fill="#f0f0f0" stroke="#000" stroke-width="1.2"/><path d="M3 10 H11 M3 12.5 H11" stroke="#000"/></svg><div class="a" style="left:166px;top:723px;width:65px;height:21px;background:#b0aeb0;border-top:2px solid #303030;border-left:2px solid #303030;border-bottom:1px solid #fff;border-right:1px solid #fff"></div><div class="a" style="left:232px;top:723px;width:67px;height:21px;background:#cac6cc;border-top:1px solid #fff;border-left:1px solid #fff;border-bottom:2px solid #303030;border-right:2px solid #303030"></div><div class="a" style="left:166px;top:746px;width:65px;height:21px;background:#cac6cc;border-top:1px solid #fff;border-left:1px solid #fff;border-bottom:2px solid #303030;border-right:2px solid #303030"></div><div class="a" style="left:232px;top:746px;width:67px;height:21px;background:#cac6cc;border-top:1px solid #fff;border-left:1px solid #fff;border-bottom:2px solid #303030;border-right:2px solid #303030"></div><div class="t" style="left:171.6px;top:728.0px;font-size:12px;font-weight:400;color:#000;letter-spacing:0.533px;">Eins</div><div class="t" style="left:238.3px;top:728.0px;font-size:12px;font-weight:400;color:#000;letter-spacing:1.300px;">Drei</div><div class="t" style="left:172.6px;top:751.0px;font-size:12px;font-weight:400;color:#000;letter-spacing:1.367px;">Zwei</div><div class="t" style="left:240.0px;top:751.0px;font-size:12px;font-weight:400;color:#000;letter-spacing:0.500px;">Vier</div><svg style="left:305px;top:726px" width="36" height="36" viewBox="0 0 36 36"><rect x="16.5" y="3.5" width="19.5" height="30" fill="#e8e8e8" stroke="#202020" stroke-width="1.2"/><rect x="17" y="23.5" width="18.5" height="5" fill="#20c8d0"/><circle cx="26.6" cy="12" r="9" fill="#f0f0f0" stroke="#303030" stroke-width=".8"/><circle cx="26.6" cy="12" r="8" fill="#58a018"/><path d="M21.6 14 Q26.6 16.5 31.6 13.5" stroke="#d8f0c0" stroke-width="1.1" fill="none"/><circle cx="27.6" cy="10" r="2.2" fill="none" stroke="#d8f0c0" stroke-width=".9"/><path d="M18 7.5 L5 17.5 L12 18 L6 34 L23 18.5 L16 18 L23 8 Z" fill="#f8f020" stroke="#303000" stroke-width="1"/></svg><svg style="left:338px;top:726px" width="7" height="4" viewBox="0 0 7 4"><path d="M0 4 L3.3 0 L6.6 4 Z" fill="#000"/></svg><svg style="left:350px;top:726px" width="36" height="36" viewBox="0 0 36 36"><path d="M4 32 L20 16" stroke="#000" stroke-width="4.5"/><path d="M4 32 L20 16" stroke="#b07838" stroke-width="2.8"/><path d="M17 8 Q22 3 30 6 Q33 9 31 15 L28 16 Q27 11 23 11 L20 13 Z" fill="#a8a8a8" stroke="#000" stroke-width="1.2"/><path d="M4 5 Q2 10 6 13 L28 31 Q32 33 33 29 Q33 27 31 26 L10 8 Q10 3 6 2 L7 6 L5 7 Z" fill="#d0d0d0" stroke="#000" stroke-width="1.2"/><circle cx="18" cy="18.7" r="8.8" fill="#f0f0f0" stroke="#303030" stroke-width=".8"/><circle cx="18" cy="18.7" r="7.8" fill="#58a018"/><path d="M13 20.7 Q18 23.2 23 20.2" stroke="#d8f0c0" stroke-width="1.1" fill="none"/><circle cx="19" cy="16.7" r="2.2" fill="none" stroke="#d8f0c0" stroke-width=".9"/></svg><svg style="left:381px;top:726px" width="7" height="4" viewBox="0 0 7 4"><path d="M0 4 L3.3 0 L6.6 4 Z" fill="#000"/></svg><svg style="left:395px;top:728px" width="32" height="32" viewBox="0 0 32 32"><circle cx="16" cy="16" r="14.5" fill="none" stroke="#404040" stroke-width="1.8" stroke-dasharray="3 2"/><circle cx="16" cy="16" r="11" fill="none" stroke="#f4f4f4" stroke-width="6"/><circle cx="16" cy="16" r="11" fill="none" stroke="#d02020" stroke-width="6" stroke-dasharray="8.6 8.7" stroke-dashoffset="4"/><circle cx="16" cy="16" r="14" fill="none" stroke="#202020" stroke-width="1"/><circle cx="16" cy="16" r="8" fill="#f0f0f0" stroke="#303030" stroke-width=".8"/><circle cx="16" cy="16" r="7" fill="#58a018"/><path d="M11 18 Q16 20.5 21 17.5" stroke="#d8f0c0" stroke-width="1.1" fill="none"/><circle cx="17" cy="14" r="2.2" fill="none" stroke="#d8f0c0" stroke-width=".9"/></svg><svg style="left:438px;top:728px" width="32" height="32" viewBox="0 0 32 32"><path d="M1.5 21.5 L22 12 L31 17 L16 29 Z" fill="#30c8d0" stroke="#000" stroke-width="1.2"/><path d="M1.5 21.5 L16 29 L16 32 L1.5 24 Z" fill="#f0f0f0" stroke="#000" stroke-width="1.2"/><path d="M16 29 L31 17 L31 20 L16 32 Z" fill="#109098" stroke="#000" stroke-width="1"/><circle cx="16" cy="7.5" r="5.3" fill="#fff8b0" stroke="#806000" stroke-width="1"/><rect x="13.5" y="12" width="5" height="8" fill="#c8c8c8" stroke="#505050" stroke-width=".8"/><path d="M13.5 14.5 H18.5 M13.5 17 H18.5" stroke="#707070"/></svg><svg style="left:481px;top:728px" width="32" height="32" viewBox="0 0 32 32"><rect x="0.8" y="1.5" width="28" height="26" fill="#d8d8d8" stroke="#000" stroke-width="1.2"/><rect x="4.3" y="5.2" width="21.6" height="19" fill="#000"/><path d="M6 8 L8 9.5 L6 11 M9 11 H11" stroke="#fff" stroke-width="1" fill="none"/><rect x="5" y="24.5" width="2" height="1.5" fill="#00c000"/><path d="M19.5 31.5 Q9 24 10 17 Q14 11 21 11 Q28 11 31 17 Q31 24 19.5 31.5 Z" fill="#f8e0b0" stroke="#806030" stroke-width="1"/><path d="M19.5 31 L13 16 M19.5 31 L17 12.5 M19.5 31 L22 12 M19.5 31 L27 14 M19.5 31 L30 19" stroke="#d0a060" stroke-width="1"/></svg><div class="a" style="left:915px;top:726px;width:50px;height:39px;background:#cac6cc;border-top:1px solid #303030;border-left:1px solid #303030;border-bottom:1px solid #fff;border-right:1px solid #fff"></div><svg style="left:915px;top:732px" width="24" height="22" viewBox="0 0 24 22"><path d="M2.2 5 L6.4 2.3 L12.4 4.4 L12.4 18.1 L10 21.1 L1.6 17.5 Z" fill="#e8e8e8" stroke="#000" stroke-width="1.2"/>
<path d="M3 8 L9 10 L9 16 L3 14 Z" fill="#109098"/>
<path d="M10.9 4.1 L14.8 1.4 L22.5 5 L22.5 18.1 L18.4 20.2 L10.9 17 Z" fill="#e8e8e8" stroke="#000" stroke-width="1.2"/>
<path d="M12 7 L18 9 L18 15 L12 13 Z" fill="#00d000"/>
<path d="M18.4 8 L22.5 5.5 L22.5 18 L18.4 20" fill="#a0a0a0"/>
</svg><svg style="left:941px;top:734px" width="22" height="21" viewBox="0 0 22 21"><path d="M1.3 10.2 L10.3 2.1 L10.3 19.1 Z" fill="#10e0e8" stroke="#000" stroke-width="1.2"/>
<path d="M10.3 1 L14.5 2 L15 10 L14.5 19.5 L10.3 20 Z" fill="#fff" stroke="#000" stroke-width="1.2"/>
<path d="M16.5 2 V19 M20 3 V18" stroke="#708070" stroke-width="1"/>
</svg><div class="t" style="left:982.2px;top:726.5px;font-size:11px;font-weight:400;color:#000;letter-spacing:0.000px;">Don</div><div class="t" style="left:974.3px;top:739.2px;font-size:11px;font-weight:400;color:#000;letter-spacing:0.250px;">18:22</div><div class="t" style="left:969.6px;top:752.6px;font-size:11px;font-weight:400;color:#000;letter-spacing:-0.480px;">Dez 07</div><div class="a" style="left:1013px;top:724px;width:11px;height:43px;background:#dcdae0;border-left:1px solid #404040"></div><svg style="left:1016px;top:725px" width="7" height="42" shape-rendering="crispEdges"><rect x="1" y="1" width="1" height="1" fill="#000"/><rect x="2" y="2" width="1" height="1" fill="#fff"/><rect x="1" y="4" width="1" height="1" fill="#000"/><rect x="2" y="5" width="1" height="1" fill="#fff"/><rect x="1" y="7" width="1" height="1" fill="#000"/><rect x="2" y="8" width="1" height="1" fill="#fff"/><rect x="1" y="10" width="1" height="1" fill="#000"/><rect x="2" y="11" width="1" height="1" fill="#fff"/><rect x="1" y="13" width="1" height="1" fill="#000"/><rect x="2" y="14" width="1" height="1" fill="#fff"/><rect x="1" y="16" width="1" height="1" fill="#000"/><rect x="2" y="17" width="1" height="1" fill="#fff"/><rect x="1" y="19" width="1" height="1" fill="#000"/><rect x="2" y="20" width="1" height="1" fill="#fff"/><rect x="1" y="22" width="1" height="1" fill="#000"/><rect x="2" y="23" width="1" height="1" fill="#fff"/><rect x="1" y="25" width="1" height="1" fill="#000"/><rect x="2" y="26" width="1" height="1" fill="#fff"/><rect x="1" y="28" width="1" height="1" fill="#000"/><rect x="2" y="29" width="1" height="1" fill="#fff"/><rect x="1" y="31" width="1" height="1" fill="#000"/><rect x="2" y="32" width="1" height="1" fill="#fff"/><rect x="1" y="34" width="1" height="1" fill="#000"/><rect x="2" y="35" width="1" height="1" fill="#fff"/><rect x="1" y="37" width="1" height="1" fill="#000"/><rect x="2" y="38" width="1" height="1" fill="#fff"/><rect x="1" y="40" width="1" height="1" fill="#000"/><rect x="2" y="41" width="1" height="1" fill="#fff"/><rect x="4" y="2" width="1" height="1" fill="#000"/><rect x="5" y="3" width="1" height="1" fill="#fff"/><rect x="4" y="5" width="1" height="1" fill="#000"/><rect x="5" y="6" width="1" height="1" fill="#fff"/><rect x="4" y="8" width="1" height="1" fill="#000"/><rect x="5" y="9" width="1" height="1" fill="#fff"/><rect x="4" y="11" width="1" height="1" fill="#000"/><rect x="5" y="12" width="1" height="1" fill="#fff"/><rect x="4" y="14" width="1" height="1" fill="#000"/><rect x="5" y="15" width="1" height="1" fill="#fff"/><rect x="4" y="17" width="1" height="1" fill="#000"/><rect x="5" y="18" width="1" height="1" fill="#fff"/><rect x="4" y="20" width="1" height="1" fill="#000"/><rect x="5" y="21" width="1" height="1" fill="#fff"/><rect x="4" y="23" width="1" height="1" fill="#000"/><rect x="5" y="24" width="1" height="1" fill="#fff"/><rect x="4" y="26" width="1" height="1" fill="#000"/><rect x="5" y="27" width="1" height="1" fill="#fff"/><rect x="4" y="29" width="1" height="1" fill="#000"/><rect x="5" y="30" width="1" height="1" fill="#fff"/><rect x="4" y="32" width="1" height="1" fill="#000"/><rect x="5" y="33" width="1" height="1" fill="#fff"/><rect x="4" y="35" width="1" height="1" fill="#000"/><rect x="5" y="36" width="1" height="1" fill="#fff"/><rect x="4" y="38" width="1" height="1" fill="#000"/><rect x="5" y="39" width="1" height="1" fill="#fff"/></svg><div class="a" style="left:1016px;top:740px;width:7px;height:11px;background:#dcdae0"></div><svg style="left:1017px;top:742px" width="5" height="8" viewBox="0 0 5 8"><path d="M0 0 L4 4 L0 8 Z" fill="#000"/></svg></body></html>
